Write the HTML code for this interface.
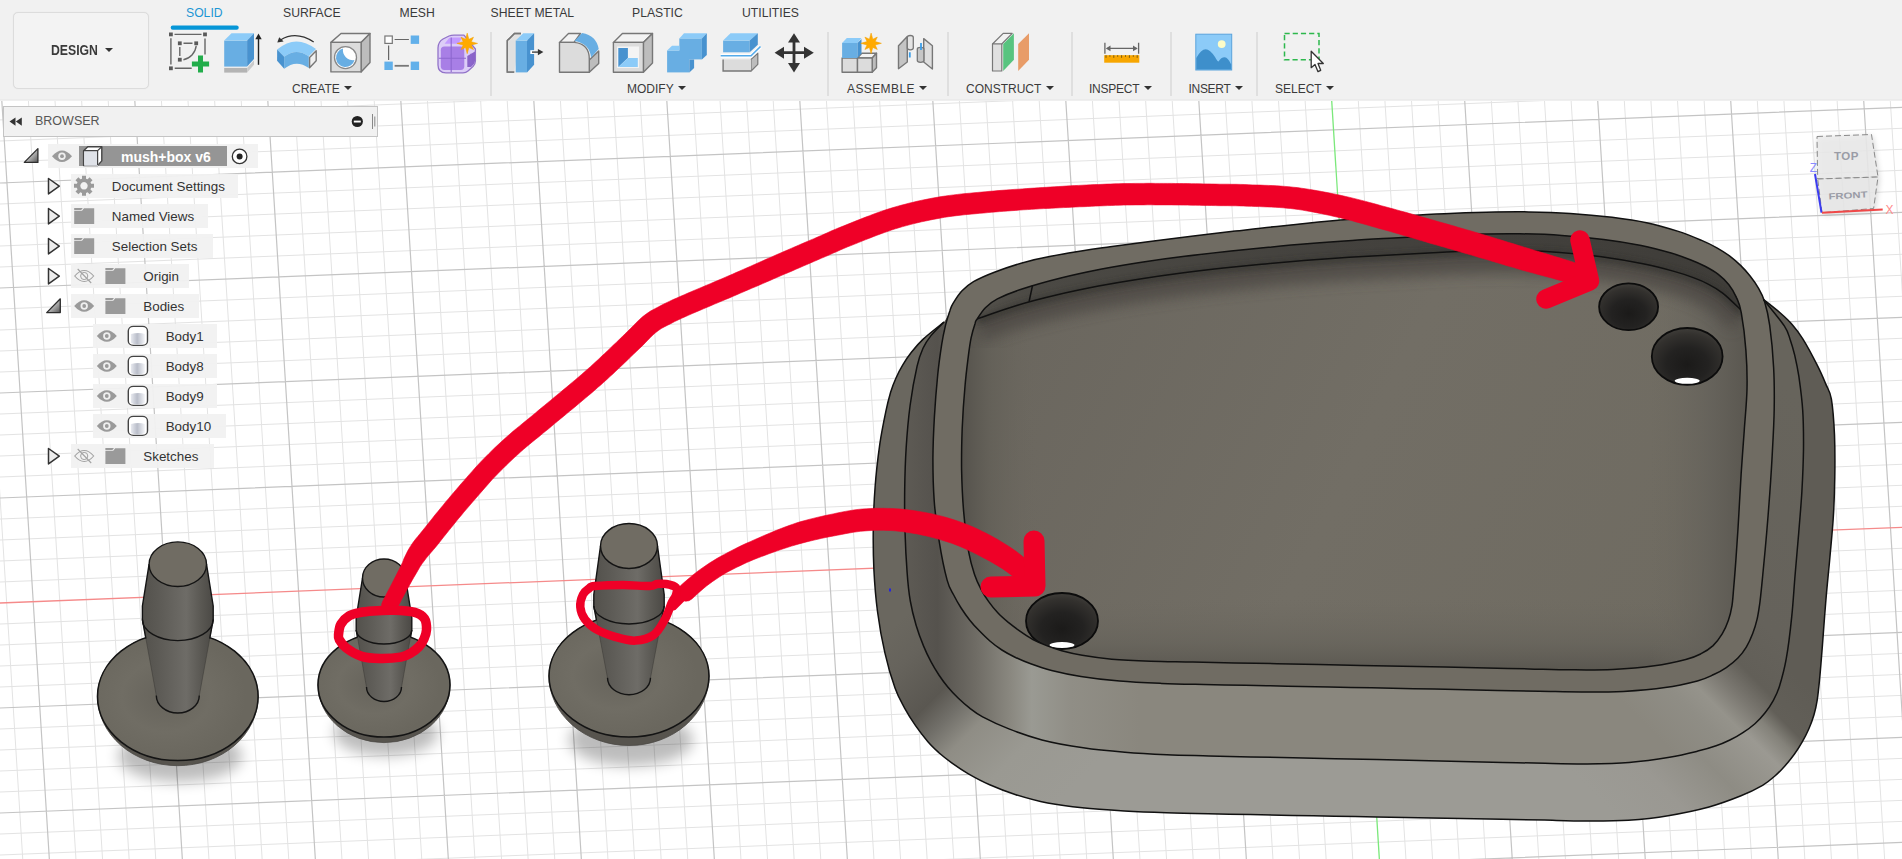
<!DOCTYPE html>
<html><head><meta charset="utf-8"><title>Fusion 360</title>
<style>
html,body{margin:0;padding:0;}
body{width:1902px;height:859px;overflow:hidden;position:relative;background:#fff;font-family:"Liberation Sans",sans-serif;}
#vp{position:absolute;left:0;top:0;width:1902px;height:859px;}
#tb{position:absolute;left:0;top:0;width:1902px;height:101px;background:linear-gradient(#f1f1f1 0,#f1f1f1 98.5px,#e8e8e8 100px,#f6f6f6 101px);}
.tab{position:absolute;top:6px;font-size:12.2px;color:#3a3a3a;white-space:nowrap;line-height:14px;}
.tab.on{color:#1c96d4;}
.lbl{position:absolute;top:82px;font-size:12px;color:#3a3a3a;white-space:nowrap;line-height:14px;}
.lbl i{display:inline-block;width:0;height:0;border-left:4px solid transparent;border-right:4px solid transparent;border-top:4.6px solid #333;margin-left:4.5px;vertical-align:2.6px;}
.sep{position:absolute;top:32px;width:2px;height:64px;background:#dfdfdf;margin-left:-0.5px;}
.ic{position:absolute;top:31px;width:42px;height:44px;}
#design{position:absolute;left:13px;top:12px;width:134px;height:75px;border:1px solid #dcdcdc;border-radius:5px;background:#f3f3f3;box-shadow:0 0 1px #ddd;}
#design span{position:absolute;left:37px;top:29.5px;font-weight:bold;font-size:14px;color:#3a3a3a;line-height:15px;transform:scaleX(0.875);transform-origin:0 50%;}
#design i{position:absolute;left:90.5px;top:35px;width:0;height:0;border-left:4px solid transparent;border-right:4px solid transparent;border-top:4.6px solid #333;}
#bh{position:absolute;left:3px;top:106px;width:373px;height:29px;background:#f1f1f1;border:1px solid #c4c4c4;}
#bh span{position:absolute;left:31px;top:7px;font-size:12.5px;color:#555;line-height:15px;}
.row{position:absolute;height:24px;background:rgba(241,241,241,0.94);}
.row span{position:absolute;top:4.5px;font-size:13.4px;color:#333;white-space:nowrap;line-height:16px;}
.bi{position:absolute;}
</style></head><body>
<svg id="vp" width="1902" height="859" viewBox="0 0 1902 859">
<defs><filter id="blur8" x="-30%" y="-30%" width="160%" height="160%"><feGaussianBlur stdDeviation="7"/></filter><filter id="blur3" x="-30%" y="-30%" width="160%" height="160%"><feGaussianBlur stdDeviation="3"/></filter></defs>
<path d="M-104.7,99 L-56.9,860 M-78.1,99 L-30.3,860 M-51.5,99 L-3.8,860 M-24.9,99 L22.8,860 M28.3,99 L76.0,860 M54.9,99 L102.6,860 M81.5,99 L129.2,860 M108.1,99 L155.8,860 M161.3,99 L209.0,860 M187.9,99 L235.6,860 M214.5,99 L262.2,860 M241.1,99 L288.8,860 M294.3,99 L342.0,860 M320.9,99 L368.6,860 M347.5,99 L395.2,860 M374.1,99 L421.8,860 M427.3,99 L475.0,860 M453.9,99 L501.6,860 M480.5,99 L528.2,860 M507.1,99 L554.8,860 M560.3,99 L608.0,860 M586.9,99 L634.6,860 M613.5,99 L661.2,860 M640.1,99 L687.8,860 M693.3,99 L741.0,860 M719.9,99 L767.6,860 M746.5,99 L794.2,860 M773.1,99 L820.8,860 M826.3,99 L874.0,860 M852.9,99 L900.6,860 M879.5,99 L927.2,860 M906.1,99 L953.8,860 M959.3,99 L1007.0,860 M985.9,99 L1033.6,860 M1012.5,99 L1060.2,860 M1039.1,99 L1086.8,860 M1092.3,99 L1140.0,860 M1118.9,99 L1166.6,860 M1145.5,99 L1193.2,860 M1172.1,99 L1219.8,860 M1225.2,99 L1273.0,860 M1251.8,99 L1299.6,860 M1278.4,99 L1326.2,860 M1305.0,99 L1352.8,860 M1358.2,99 L1406.0,860 M1384.8,99 L1432.6,860 M1411.4,99 L1459.2,860 M1438.0,99 L1485.7,860 M1491.2,99 L1538.9,860 M1517.8,99 L1565.5,860 M1544.4,99 L1592.1,860 M1571.0,99 L1618.7,860 M1624.2,99 L1671.9,860 M1650.8,99 L1698.5,860 M1677.4,99 L1725.1,860 M1704.0,99 L1751.7,860 M1757.2,99 L1804.9,860 M1783.8,99 L1831.5,860 M1810.4,99 L1858.1,860 M1837.0,99 L1884.7,860 M1890.2,99 L1937.9,860 M1916.8,99 L1964.5,860 M1943.4,99 L1991.1,860 M-2,99.0 L1904,23.2 M-2,120.0 L1904,44.2 M-2,141.1 L1904,65.2 M-2,162.1 L1904,86.2 M-2,204.1 L1904,128.2 M-2,225.1 L1904,149.2 M-2,246.1 L1904,170.2 M-2,267.1 L1904,191.2 M-2,309.1 L1904,233.2 M-2,330.1 L1904,254.2 M-2,351.1 L1904,275.2 M-2,372.1 L1904,296.2 M-2,414.1 L1904,338.2 M-2,435.1 L1904,359.2 M-2,456.1 L1904,380.2 M-2,477.1 L1904,401.2 M-2,519.1 L1904,443.2 M-2,540.1 L1904,464.2 M-2,561.1 L1904,485.2 M-2,582.1 L1904,506.2 M-2,624.1 L1904,548.2 M-2,645.1 L1904,569.2 M-2,666.1 L1904,590.2 M-2,687.1 L1904,611.3 M-2,729.1 L1904,653.3 M-2,750.1 L1904,674.3 M-2,771.1 L1904,695.3 M-2,792.1 L1904,716.3 M-2,834.1 L1904,758.3 M-2,855.1 L1904,779.3 M-2,876.1 L1904,800.3 M-2,897.1 L1904,821.3 M-2,939.1 L1904,863.3" stroke="#e3e3e3" stroke-width="1" fill="none"/>
<path d="M1.7,99 L49.4,860 M134.7,99 L182.4,860 M267.7,99 L315.4,860 M400.7,99 L448.4,860 M533.7,99 L581.4,860 M666.7,99 L714.4,860 M799.7,99 L847.4,860 M932.7,99 L980.4,860 M1065.7,99 L1113.4,860 M1198.7,99 L1246.4,860 M1464.6,99 L1512.3,860 M1597.6,99 L1645.3,860 M1730.6,99 L1778.3,860 M1863.6,99 L1911.3,860 M-2,183.1 L1904,107.2 M-2,288.1 L1904,212.2 M-2,393.1 L1904,317.2 M-2,498.1 L1904,422.2 M-2,708.1 L1904,632.3 M-2,813.1 L1904,737.3 M-2,918.1 L1904,842.3" stroke="#c4c4c4" stroke-width="1.2" fill="none"/>
<path d="M-2,603.1 L1904,527.2" stroke="#f58a8a" stroke-width="1.3" fill="none"/>
<path d="M1331.6,99 L1379.4,860" stroke="#7be87b" stroke-width="1.3" fill="none"/>
<defs>
<linearGradient id="gLow" gradientUnits="userSpaceOnUse" x1="873" y1="0" x2="1836" y2="0">
<stop offset="0" stop-color="#6a675f"/><stop offset="0.03" stop-color="#63605a"/><stop offset="0.055" stop-color="#5a5751"/><stop offset="0.075" stop-color="#74726b"/><stop offset="0.095" stop-color="#8f8d85"/><stop offset="0.13" stop-color="#9a9992"/><stop offset="0.17" stop-color="#9c9b95"/><stop offset="0.4" stop-color="#9d9c96"/><stop offset="0.8" stop-color="#9a9892"/><stop offset="0.87" stop-color="#8e8c84"/><stop offset="0.915" stop-color="#9b9992"/><stop offset="0.945" stop-color="#6a6760"/><stop offset="0.97" stop-color="#615e57"/><stop offset="1" stop-color="#5f5c55"/>
</linearGradient>
<linearGradient id="gLowL" gradientUnits="userSpaceOnUse" x1="0" y1="0" x2="1000" y2="1000">
<stop offset="0.76" stop-color="#6a675f"/><stop offset="0.783" stop-color="#66635c"/><stop offset="0.816" stop-color="#5a5751"/><stop offset="0.833" stop-color="#72706a"/><stop offset="0.851" stop-color="#8f8d85"/><stop offset="0.885" stop-color="#9a9992"/><stop offset="0.93" stop-color="#9c9b95"/>
</linearGradient>
<linearGradient id="gLowR" gradientUnits="userSpaceOnUse" x1="1000" y1="1000" x2="2000" y2="0">
<stop offset="0.40" stop-color="#9c9b95"/><stop offset="0.4378" stop-color="#9a9892"/><stop offset="0.4725" stop-color="#8e8c84"/><stop offset="0.5065" stop-color="#9b9992"/><stop offset="0.52" stop-color="#84827a"/><stop offset="0.531" stop-color="#625f58"/><stop offset="0.56" stop-color="#5f5c55"/>
</linearGradient>
<linearGradient id="gUpR" gradientUnits="userSpaceOnUse" x1="1000" y1="1000" x2="2000" y2="0">
<stop offset="0.3" stop-color="#8a877e"/><stop offset="0.46" stop-color="#8a877e"/><stop offset="0.49" stop-color="#8f8d85"/><stop offset="0.505" stop-color="#95938b"/><stop offset="0.521" stop-color="#7b7871"/><stop offset="0.538" stop-color="#625f58"/><stop offset="0.57" stop-color="#65625b"/><stop offset="0.7" stop-color="#67645c"/>
</linearGradient>
<linearGradient id="gBack" gradientUnits="userSpaceOnUse" x1="960" y1="0" x2="1750" y2="0">
<stop offset="0" stop-color="#55524c"/><stop offset="0.1" stop-color="#4b4944"/><stop offset="0.45" stop-color="#44423e"/><stop offset="1" stop-color="#3f3d39"/>
</linearGradient>
<clipPath id="cL"><rect x="800" y="150" width="550" height="720"/></clipPath>
<clipPath id="cR"><rect x="1350" y="150" width="560" height="720"/></clipPath>
<linearGradient id="gUp" gradientUnits="userSpaceOnUse" x1="873" y1="0" x2="1836" y2="0">
<stop offset="0" stop-color="#65625b"/><stop offset="0.035" stop-color="#5d5a54"/><stop offset="0.067" stop-color="#55524d"/><stop offset="0.107" stop-color="#6f6c65"/><stop offset="0.143" stop-color="#8a8880"/><stop offset="0.165" stop-color="#9a9a93"/><stop offset="0.205" stop-color="#908e86"/><stop offset="0.277" stop-color="#8a877e"/><stop offset="0.5" stop-color="#8a877e"/><stop offset="0.83" stop-color="#88857c"/><stop offset="0.885" stop-color="#94928a"/><stop offset="0.915" stop-color="#68655d"/><stop offset="0.94" stop-color="#64615a"/><stop offset="1" stop-color="#66635b"/>
</linearGradient>
<linearGradient id="gFloor" gradientUnits="userSpaceOnUse" x1="1000" y1="300" x2="1700" y2="640">
<stop offset="0" stop-color="#6a665e"/><stop offset="0.5" stop-color="#726e65"/><stop offset="1" stop-color="#6f6b61"/>
</linearGradient>
<linearGradient id="gWallT" gradientUnits="userSpaceOnUse" x1="1350" y1="235" x2="1365" y2="330">
<stop offset="0" stop-color="#3f3d39"/><stop offset="0.2" stop-color="#4a4843"/><stop offset="0.45" stop-color="#5b5851" stop-opacity="0.9"/><stop offset="1" stop-color="#6c685f" stop-opacity="0"/>
</linearGradient>
<linearGradient id="gWallL" gradientUnits="userSpaceOnUse" x1="962" y1="0" x2="1040" y2="0">
<stop offset="0" stop-color="#55524c"/><stop offset="0.35" stop-color="#625f57" stop-opacity="0.8"/><stop offset="1" stop-color="#6c685f" stop-opacity="0"/>
</linearGradient>
<linearGradient id="gWallR" gradientUnits="userSpaceOnUse" x1="1747" y1="0" x2="1650" y2="0">
<stop offset="0" stop-color="#5a5750"/><stop offset="0.4" stop-color="#64615a" stop-opacity="0.8"/><stop offset="1" stop-color="#6c685f" stop-opacity="0"/>
</linearGradient>
<linearGradient id="gWallB" gradientUnits="userSpaceOnUse" x1="0" y1="672" x2="0" y2="600">
<stop offset="0" stop-color="#59564f"/><stop offset="0.4" stop-color="#65625a" stop-opacity="0.7"/><stop offset="1" stop-color="#6c685f" stop-opacity="0"/>
</linearGradient>
<radialGradient id="gHole" cx="0.5" cy="0.64" r="0.66">
<stop offset="0" stop-color="#1b1a19"/><stop offset="0.45" stop-color="#232221"/><stop offset="0.8" stop-color="#33312e"/><stop offset="1" stop-color="#42403c"/>
</radialGradient>
<clipPath id="cR2"><path d="M976.7,319.7C978.4,317.1 981.9,311.2 985.4,307.7C988.8,304.3 991.5,301.9 997.4,298.9C1003.2,295.9 1009.9,293.0 1020.5,289.5C1031.1,286.0 1047.2,281.4 1060.8,278.0C1074.3,274.6 1088.1,271.7 1101.8,269.0C1115.5,266.4 1129.4,264.1 1143.2,262.0C1157.0,259.9 1170.9,258.0 1184.8,256.3C1198.7,254.5 1212.6,253.0 1226.6,251.5C1240.5,250.0 1254.4,248.6 1268.4,247.3C1282.3,245.9 1296.2,244.6 1310.2,243.5C1324.2,242.3 1338.1,241.3 1352.1,240.4C1366.1,239.4 1380.1,238.7 1394.0,237.9C1408.0,237.1 1422.0,236.3 1436.0,235.7C1450.0,235.1 1464.0,234.4 1478.0,234.1C1492.0,233.8 1506.0,233.5 1520.0,233.8C1534.0,234.0 1548.0,234.4 1561.9,235.4C1575.9,236.3 1590.5,237.7 1603.7,239.4C1616.9,241.0 1629.9,243.2 1641.2,245.4C1652.4,247.7 1662.9,250.6 1671.1,253.0C1679.4,255.5 1685.2,257.7 1690.9,260.0C1696.6,262.2 1700.9,264.1 1705.5,266.5C1710.0,268.9 1714.4,271.3 1718.3,274.3C1722.2,277.3 1725.9,280.9 1728.9,284.7C1732.0,288.6 1734.5,292.9 1736.5,297.6C1738.6,302.2 1739.8,304.0 1741.3,312.8C1742.9,321.6 1745.0,337.6 1745.9,350.4C1746.9,363.2 1747.3,375.8 1747.0,389.3C1746.7,402.8 1745.1,417.2 1744.2,431.2C1743.2,445.1 1742.1,459.1 1741.2,473.0C1740.3,487.0 1739.6,501.0 1738.8,515.0C1738.0,529.0 1737.0,544.8 1736.1,556.9C1735.3,569.0 1734.4,579.6 1733.7,587.8C1733.0,595.9 1732.8,600.3 1732.0,605.7C1731.1,611.1 1730.1,615.5 1728.4,620.2C1726.8,624.9 1724.7,629.6 1722.2,633.8C1719.6,638.0 1716.6,642.2 1713.1,645.6C1709.5,648.9 1705.3,651.6 1700.7,653.9C1696.2,656.2 1693.5,657.6 1685.8,659.5C1678.1,661.5 1666.7,664.2 1654.5,665.8C1642.3,667.5 1626.7,668.8 1612.8,669.4C1598.8,670.1 1584.8,669.9 1570.8,669.8C1556.8,669.7 1542.8,669.2 1528.8,668.9C1514.8,668.6 1500.8,668.2 1486.8,667.9C1472.8,667.7 1458.8,667.4 1444.8,667.1C1430.8,666.8 1416.8,666.5 1402.8,666.3C1388.8,666.0 1374.8,665.7 1360.8,665.4C1346.8,665.1 1332.8,664.9 1318.8,664.6C1304.8,664.3 1290.8,664.0 1276.8,663.7C1262.8,663.5 1248.7,663.2 1234.7,662.9C1220.7,662.6 1206.7,662.3 1192.7,662.1C1178.7,661.8 1164.2,661.7 1150.7,661.3C1137.3,660.8 1123.3,660.2 1111.8,659.2C1100.4,658.2 1090.5,656.7 1082.2,655.3C1073.8,653.9 1067.6,652.4 1061.7,650.8C1055.8,649.1 1051.4,647.5 1046.6,645.6C1041.8,643.7 1037.3,641.8 1032.9,639.5C1028.5,637.1 1024.4,634.3 1020.3,631.4C1016.2,628.6 1012.1,625.4 1008.3,622.4C1004.6,619.3 1001.3,616.5 998.0,613.0C994.6,609.5 991.4,605.5 988.5,601.4C985.6,597.4 983.0,593.1 980.7,588.6C978.4,584.2 976.7,580.9 974.7,574.9C972.7,568.9 970.7,563.2 968.8,552.7C967.0,542.2 964.9,525.9 963.7,512.1C962.5,498.4 961.9,484.2 961.6,470.2C961.4,456.2 961.7,442.2 962.2,428.2C962.8,414.3 963.9,398.4 965.0,386.3C966.0,374.2 967.4,363.7 968.4,355.6C969.4,347.5 970.0,343.2 971.1,337.8C972.2,332.5 974.1,326.4 975.1,323.4C976.0,320.4 975.0,322.4 976.7,319.7Z"/></clipPath>
<filter id="blur8" x="-30%" y="-30%" width="160%" height="160%"><feGaussianBlur stdDeviation="7"/></filter>
<filter id="blur3" x="-30%" y="-30%" width="160%" height="160%"><feGaussianBlur stdDeviation="3"/></filter>
</defs>
<path d="M1763.5,299.5C1766.4,301.8 1775.9,309.1 1780.6,313.2C1785.4,317.4 1788.4,320.1 1792.1,324.4C1795.8,328.6 1798.7,332.2 1802.8,338.8C1806.9,345.4 1812.9,356.6 1816.7,364.2C1820.6,371.7 1823.4,378.3 1825.8,384.1C1828.3,389.9 1829.9,390.6 1831.4,399.1C1832.8,407.5 1833.9,421.9 1834.5,434.9C1835.0,447.8 1835.0,462.8 1834.8,476.8C1834.6,490.8 1834.1,504.8 1833.2,518.8C1832.3,532.8 1830.8,546.7 1829.6,560.7C1828.3,574.6 1826.8,588.5 1825.7,602.5C1824.5,616.5 1823.6,631.4 1822.5,644.4C1821.5,657.4 1820.4,671.0 1819.5,680.3C1818.6,689.5 1818.1,694.4 1817.2,700.1C1816.3,705.9 1815.4,710.0 1814.0,714.8C1812.6,719.5 1810.9,724.3 1808.9,728.8C1806.9,733.4 1804.5,738.0 1802.1,742.2C1799.7,746.4 1797.4,750.1 1794.5,754.0C1791.7,757.9 1788.5,761.9 1785.1,765.7C1781.8,769.4 1778.4,773.1 1774.6,776.3C1770.9,779.6 1768.2,782.0 1762.6,785.3C1757.0,788.5 1750.0,792.1 1741.0,795.8C1732.1,799.4 1721.2,803.6 1709.0,807.0C1696.9,810.3 1681.5,813.5 1668.1,815.7C1654.6,818.0 1642.0,819.3 1628.4,820.2C1614.8,821.0 1600.4,820.9 1586.4,820.9C1572.4,820.9 1558.4,820.4 1544.4,820.1C1530.4,819.9 1516.4,819.6 1502.4,819.3C1488.3,819.1 1474.3,818.8 1460.3,818.5C1446.3,818.3 1432.3,818.0 1418.3,817.7C1404.3,817.5 1390.3,817.2 1376.3,816.9C1362.3,816.7 1348.3,816.4 1334.3,816.2C1320.3,815.9 1306.2,815.6 1292.2,815.4C1278.2,815.1 1264.2,814.8 1250.2,814.6C1236.2,814.3 1222.2,814.1 1208.2,813.8C1194.2,813.5 1180.2,813.2 1166.2,812.7C1152.2,812.3 1138.2,811.8 1124.2,811.0C1110.2,810.1 1095.0,809.1 1082.3,807.8C1069.5,806.5 1058.8,805.1 1047.7,803.0C1036.6,800.8 1025.5,797.7 1015.8,794.7C1006.2,791.7 997.6,788.3 989.7,784.8C981.8,781.4 974.7,777.5 968.4,773.9C962.1,770.2 956.6,766.4 951.7,762.9C946.9,759.4 943.2,756.5 939.2,753.0C935.3,749.4 931.8,746.2 927.9,741.7C924.0,737.1 919.6,731.5 915.7,725.9C911.8,720.3 908.0,714.3 904.6,708.1C901.2,701.8 898.4,697.5 895.1,688.3C891.8,679.1 887.8,665.6 884.9,652.8C881.9,640.0 879.3,625.4 877.5,611.5C875.7,597.7 874.6,583.7 873.9,569.7C873.2,555.8 873.1,541.7 873.3,527.7C873.5,513.7 874.1,499.7 875.2,485.8C876.2,471.8 878.1,456.4 879.8,444.1C881.6,431.7 884.0,420.3 885.8,411.7C887.6,403.0 889.0,397.8 890.6,392.3C892.3,386.7 893.8,382.8 895.9,378.2C897.9,373.7 900.2,369.2 902.8,364.9C905.3,360.6 907.8,356.8 911.2,352.5C914.6,348.2 917.7,344.2 923.2,339.1C928.6,334.0 940.5,324.9 944.0,322.0Z" fill="url(#gLowL)" clip-path="url(#cL)"/>
<path d="M1763.5,299.5C1766.4,301.8 1775.9,309.1 1780.6,313.2C1785.4,317.4 1788.4,320.1 1792.1,324.4C1795.8,328.6 1798.7,332.2 1802.8,338.8C1806.9,345.4 1812.9,356.6 1816.7,364.2C1820.6,371.7 1823.4,378.3 1825.8,384.1C1828.3,389.9 1829.9,390.6 1831.4,399.1C1832.8,407.5 1833.9,421.9 1834.5,434.9C1835.0,447.8 1835.0,462.8 1834.8,476.8C1834.6,490.8 1834.1,504.8 1833.2,518.8C1832.3,532.8 1830.8,546.7 1829.6,560.7C1828.3,574.6 1826.8,588.5 1825.7,602.5C1824.5,616.5 1823.6,631.4 1822.5,644.4C1821.5,657.4 1820.4,671.0 1819.5,680.3C1818.6,689.5 1818.1,694.4 1817.2,700.1C1816.3,705.9 1815.4,710.0 1814.0,714.8C1812.6,719.5 1810.9,724.3 1808.9,728.8C1806.9,733.4 1804.5,738.0 1802.1,742.2C1799.7,746.4 1797.4,750.1 1794.5,754.0C1791.7,757.9 1788.5,761.9 1785.1,765.7C1781.8,769.4 1778.4,773.1 1774.6,776.3C1770.9,779.6 1768.2,782.0 1762.6,785.3C1757.0,788.5 1750.0,792.1 1741.0,795.8C1732.1,799.4 1721.2,803.6 1709.0,807.0C1696.9,810.3 1681.5,813.5 1668.1,815.7C1654.6,818.0 1642.0,819.3 1628.4,820.2C1614.8,821.0 1600.4,820.9 1586.4,820.9C1572.4,820.9 1558.4,820.4 1544.4,820.1C1530.4,819.9 1516.4,819.6 1502.4,819.3C1488.3,819.1 1474.3,818.8 1460.3,818.5C1446.3,818.3 1432.3,818.0 1418.3,817.7C1404.3,817.5 1390.3,817.2 1376.3,816.9C1362.3,816.7 1348.3,816.4 1334.3,816.2C1320.3,815.9 1306.2,815.6 1292.2,815.4C1278.2,815.1 1264.2,814.8 1250.2,814.6C1236.2,814.3 1222.2,814.1 1208.2,813.8C1194.2,813.5 1180.2,813.2 1166.2,812.7C1152.2,812.3 1138.2,811.8 1124.2,811.0C1110.2,810.1 1095.0,809.1 1082.3,807.8C1069.5,806.5 1058.8,805.1 1047.7,803.0C1036.6,800.8 1025.5,797.7 1015.8,794.7C1006.2,791.7 997.6,788.3 989.7,784.8C981.8,781.4 974.7,777.5 968.4,773.9C962.1,770.2 956.6,766.4 951.7,762.9C946.9,759.4 943.2,756.5 939.2,753.0C935.3,749.4 931.8,746.2 927.9,741.7C924.0,737.1 919.6,731.5 915.7,725.9C911.8,720.3 908.0,714.3 904.6,708.1C901.2,701.8 898.4,697.5 895.1,688.3C891.8,679.1 887.8,665.6 884.9,652.8C881.9,640.0 879.3,625.4 877.5,611.5C875.7,597.7 874.6,583.7 873.9,569.7C873.2,555.8 873.1,541.7 873.3,527.7C873.5,513.7 874.1,499.7 875.2,485.8C876.2,471.8 878.1,456.4 879.8,444.1C881.6,431.7 884.0,420.3 885.8,411.7C887.6,403.0 889.0,397.8 890.6,392.3C892.3,386.7 893.8,382.8 895.9,378.2C897.9,373.7 900.2,369.2 902.8,364.9C905.3,360.6 907.8,356.8 911.2,352.5C914.6,348.2 917.7,344.2 923.2,339.1C928.6,334.0 940.5,324.9 944.0,322.0Z" fill="url(#gLowR)" clip-path="url(#cR)"/>
<path d="M944.0,322.0C941.8,324.3 934.5,331.3 931.0,335.6C927.5,340.0 925.3,343.1 923.0,348.2C920.7,353.3 919.2,356.7 917.1,366.2C914.9,375.8 911.9,392.0 910.1,405.5C908.3,419.0 907.1,433.4 906.2,447.3C905.3,461.3 904.9,475.3 904.7,489.3C904.5,503.3 904.6,517.5 905.0,531.3C905.4,545.1 906.2,560.6 907.1,572.2C907.9,583.9 908.8,592.2 910.3,601.0C911.8,609.8 913.9,617.8 916.1,625.2C918.3,632.7 921.0,639.8 923.5,645.9C926.0,652.1 928.6,657.3 931.2,662.1C933.8,667.0 936.2,670.8 938.9,675.0C941.7,679.2 944.6,683.2 947.8,687.0C951.0,690.9 954.5,694.5 958.1,698.0C961.7,701.5 965.3,704.7 969.4,707.9C973.4,711.0 976.0,713.4 982.6,716.9C989.2,720.4 999.0,725.1 1008.9,728.9C1018.8,732.8 1029.6,736.7 1042.0,739.9C1054.4,743.1 1069.4,745.8 1083.2,747.8C1097.0,749.9 1111.0,751.1 1124.9,752.2C1138.9,753.4 1152.9,754.1 1166.9,754.7C1180.9,755.3 1194.9,755.5 1208.9,755.9C1222.9,756.3 1236.9,756.5 1250.9,756.9C1264.9,757.2 1278.9,757.5 1292.9,757.8C1306.9,758.1 1320.9,758.4 1334.9,758.7C1348.9,759.0 1362.9,759.3 1376.9,759.6C1390.9,759.9 1404.9,760.2 1419.0,760.5C1433.0,760.8 1447.0,761.1 1461.0,761.4C1475.0,761.8 1489.0,762.1 1503.0,762.4C1517.0,762.7 1531.0,763.1 1545.0,763.3C1559.0,763.6 1573.0,764.0 1587.0,763.9C1601.0,763.7 1615.2,763.5 1629.0,762.4C1642.7,761.3 1658.1,759.1 1669.5,757.2C1681.0,755.3 1690.1,753.0 1697.8,751.1C1705.6,749.3 1710.7,747.7 1716.1,745.8C1721.4,744.0 1725.4,742.2 1729.9,740.0C1734.4,737.8 1738.8,735.4 1742.9,732.6C1747.1,729.9 1751.2,727.0 1754.9,723.7C1758.6,720.4 1762.1,716.7 1765.1,712.8C1768.2,708.9 1771.0,704.6 1773.4,700.3C1775.8,695.9 1777.2,693.5 1779.4,686.5C1781.5,679.6 1784.3,670.0 1786.3,658.4C1788.4,646.8 1790.3,630.8 1791.7,616.9C1793.2,603.0 1793.9,588.9 1795.1,575.0C1796.2,561.0 1797.6,547.1 1798.7,533.1C1799.8,519.2 1801.1,505.2 1801.9,491.2C1802.7,477.2 1803.3,462.7 1803.5,449.3C1803.6,435.8 1803.5,422.4 1802.7,410.3C1802.0,398.2 1800.2,385.8 1798.9,376.6C1797.5,367.4 1796.1,361.2 1794.7,355.1C1793.2,348.9 1791.9,344.6 1790.2,339.7C1788.5,334.8 1788.7,332.6 1784.3,325.9C1779.8,319.2 1767.0,303.9 1763.5,299.5 L950,313Z" fill="url(#gUp)" clip-path="url(#cL)"/>
<path d="M944.0,322.0C941.8,324.3 934.5,331.3 931.0,335.6C927.5,340.0 925.3,343.1 923.0,348.2C920.7,353.3 919.2,356.7 917.1,366.2C914.9,375.8 911.9,392.0 910.1,405.5C908.3,419.0 907.1,433.4 906.2,447.3C905.3,461.3 904.9,475.3 904.7,489.3C904.5,503.3 904.6,517.5 905.0,531.3C905.4,545.1 906.2,560.6 907.1,572.2C907.9,583.9 908.8,592.2 910.3,601.0C911.8,609.8 913.9,617.8 916.1,625.2C918.3,632.7 921.0,639.8 923.5,645.9C926.0,652.1 928.6,657.3 931.2,662.1C933.8,667.0 936.2,670.8 938.9,675.0C941.7,679.2 944.6,683.2 947.8,687.0C951.0,690.9 954.5,694.5 958.1,698.0C961.7,701.5 965.3,704.7 969.4,707.9C973.4,711.0 976.0,713.4 982.6,716.9C989.2,720.4 999.0,725.1 1008.9,728.9C1018.8,732.8 1029.6,736.7 1042.0,739.9C1054.4,743.1 1069.4,745.8 1083.2,747.8C1097.0,749.9 1111.0,751.1 1124.9,752.2C1138.9,753.4 1152.9,754.1 1166.9,754.7C1180.9,755.3 1194.9,755.5 1208.9,755.9C1222.9,756.3 1236.9,756.5 1250.9,756.9C1264.9,757.2 1278.9,757.5 1292.9,757.8C1306.9,758.1 1320.9,758.4 1334.9,758.7C1348.9,759.0 1362.9,759.3 1376.9,759.6C1390.9,759.9 1404.9,760.2 1419.0,760.5C1433.0,760.8 1447.0,761.1 1461.0,761.4C1475.0,761.8 1489.0,762.1 1503.0,762.4C1517.0,762.7 1531.0,763.1 1545.0,763.3C1559.0,763.6 1573.0,764.0 1587.0,763.9C1601.0,763.7 1615.2,763.5 1629.0,762.4C1642.7,761.3 1658.1,759.1 1669.5,757.2C1681.0,755.3 1690.1,753.0 1697.8,751.1C1705.6,749.3 1710.7,747.7 1716.1,745.8C1721.4,744.0 1725.4,742.2 1729.9,740.0C1734.4,737.8 1738.8,735.4 1742.9,732.6C1747.1,729.9 1751.2,727.0 1754.9,723.7C1758.6,720.4 1762.1,716.7 1765.1,712.8C1768.2,708.9 1771.0,704.6 1773.4,700.3C1775.8,695.9 1777.2,693.5 1779.4,686.5C1781.5,679.6 1784.3,670.0 1786.3,658.4C1788.4,646.8 1790.3,630.8 1791.7,616.9C1793.2,603.0 1793.9,588.9 1795.1,575.0C1796.2,561.0 1797.6,547.1 1798.7,533.1C1799.8,519.2 1801.1,505.2 1801.9,491.2C1802.7,477.2 1803.3,462.7 1803.5,449.3C1803.6,435.8 1803.5,422.4 1802.7,410.3C1802.0,398.2 1800.2,385.8 1798.9,376.6C1797.5,367.4 1796.1,361.2 1794.7,355.1C1793.2,348.9 1791.9,344.6 1790.2,339.7C1788.5,334.8 1788.7,332.6 1784.3,325.9C1779.8,319.2 1767.0,303.9 1763.5,299.5 L950,313Z" fill="url(#gUpR)" clip-path="url(#cR)"/>
<path d="M953.2,303.1C955.2,299.9 958.4,294.6 961.8,291.0C965.2,287.4 968.1,284.9 973.5,281.7C978.9,278.6 985.4,275.6 994.4,272.2C1003.4,268.8 1015.2,264.6 1027.6,261.4C1039.9,258.2 1054.9,255.4 1068.6,253.0C1082.4,250.6 1096.3,248.7 1110.1,246.7C1124.0,244.8 1137.9,243.0 1151.8,241.2C1165.7,239.4 1179.6,237.7 1193.5,236.0C1207.4,234.4 1221.3,232.7 1235.2,231.1C1249.1,229.5 1263.0,227.8 1276.9,226.4C1290.8,224.9 1304.8,223.4 1318.7,222.1C1332.6,220.8 1346.6,219.6 1360.6,218.6C1374.5,217.6 1388.5,216.7 1402.5,215.9C1416.4,215.1 1430.4,214.3 1444.4,213.7C1458.4,213.0 1472.4,212.5 1486.4,212.2C1500.4,211.9 1514.4,211.7 1528.4,211.9C1542.4,212.1 1556.4,212.5 1570.3,213.4C1584.3,214.3 1599.4,215.7 1612.1,217.2C1624.8,218.8 1635.6,220.3 1646.6,222.7C1657.7,225.0 1669.2,228.5 1678.3,231.4C1687.5,234.4 1695.2,237.7 1701.6,240.4C1708.0,243.1 1712.2,245.2 1716.9,247.8C1721.5,250.4 1725.5,252.9 1729.5,255.8C1733.5,258.8 1737.4,262.3 1740.8,265.6C1744.3,269.0 1747.2,272.3 1750.1,276.0C1753.1,279.8 1756.2,284.1 1758.6,288.4C1761.1,292.7 1762.9,295.8 1764.7,302.0C1766.6,308.2 1768.2,314.6 1769.7,325.4C1771.2,336.3 1772.9,353.2 1773.6,367.2C1774.4,381.1 1774.4,395.1 1774.2,409.1C1774.0,423.1 1773.2,437.1 1772.4,451.1C1771.7,465.0 1770.8,479.0 1769.8,493.0C1768.8,506.9 1767.7,520.9 1766.5,534.8C1765.3,548.8 1763.7,565.4 1762.6,576.7C1761.5,587.9 1760.8,595.4 1759.9,602.5C1758.9,609.5 1758.3,614.0 1757.1,619.2C1755.9,624.4 1754.5,628.9 1752.7,633.5C1750.9,638.2 1748.8,643.0 1746.3,647.1C1743.8,651.2 1741.2,654.7 1737.9,658.1C1734.6,661.6 1730.4,664.8 1726.3,667.6C1722.2,670.4 1718.1,672.6 1713.2,674.8C1708.4,677.1 1705.4,678.8 1697.4,680.9C1689.3,683.0 1677.5,685.8 1665.1,687.5C1652.8,689.3 1637.4,690.6 1623.4,691.4C1609.5,692.1 1595.4,692.0 1581.4,692.0C1567.4,692.0 1553.4,691.5 1539.4,691.3C1525.4,691.0 1511.4,690.7 1497.4,690.4C1483.4,690.1 1469.5,689.8 1455.5,689.5C1441.5,689.2 1427.5,689.0 1413.5,688.7C1399.5,688.4 1385.5,688.1 1371.5,687.8C1357.5,687.5 1343.5,687.3 1329.5,687.0C1315.5,686.7 1301.5,686.4 1287.5,686.2C1273.5,685.9 1259.5,685.6 1245.5,685.3C1231.5,685.0 1217.5,684.8 1203.5,684.5C1189.5,684.2 1175.5,684.0 1161.5,683.4C1147.5,682.8 1133.0,682.2 1119.6,681.0C1106.1,679.9 1092.2,678.2 1080.9,676.4C1069.6,674.6 1060.0,672.5 1051.6,670.4C1043.2,668.3 1036.8,666.0 1030.7,663.8C1024.6,661.6 1019.8,659.5 1015.0,657.2C1010.3,654.9 1006.1,652.7 1001.9,650.0C997.7,647.3 993.7,644.3 989.9,641.0C986.1,637.8 982.5,634.1 979.1,630.6C975.8,627.2 972.8,624.0 969.8,620.2C966.8,616.4 963.8,612.2 961.1,608.0C958.4,603.8 956.0,599.6 953.7,595.0C951.3,590.4 949.6,589.4 947.2,580.4C944.8,571.5 941.3,554.6 939.2,541.3C937.0,528.0 935.2,514.5 934.2,500.7C933.2,486.9 932.9,472.8 932.9,458.8C933.0,444.8 933.6,430.8 934.4,416.8C935.2,402.9 936.5,387.1 937.7,375.0C938.9,362.9 940.4,352.7 941.7,344.3C943.0,335.9 944.3,330.4 945.6,324.8C947.0,319.1 948.7,314.0 950.0,310.4C951.2,306.8 951.2,306.3 953.2,303.1Z" fill="#706c63"/>
<path d="M976.7,319.7C978.4,317.1 981.9,311.2 985.4,307.7C988.8,304.3 991.5,301.9 997.4,298.9C1003.2,295.9 1009.9,293.0 1020.5,289.5C1031.1,286.0 1047.2,281.4 1060.8,278.0C1074.3,274.6 1088.1,271.7 1101.8,269.0C1115.5,266.4 1129.4,264.1 1143.2,262.0C1157.0,259.9 1170.9,258.0 1184.8,256.3C1198.7,254.5 1212.6,253.0 1226.6,251.5C1240.5,250.0 1254.4,248.6 1268.4,247.3C1282.3,245.9 1296.2,244.6 1310.2,243.5C1324.2,242.3 1338.1,241.3 1352.1,240.4C1366.1,239.4 1380.1,238.7 1394.0,237.9C1408.0,237.1 1422.0,236.3 1436.0,235.7C1450.0,235.1 1464.0,234.4 1478.0,234.1C1492.0,233.8 1506.0,233.5 1520.0,233.8C1534.0,234.0 1548.0,234.4 1561.9,235.4C1575.9,236.3 1590.5,237.7 1603.7,239.4C1616.9,241.0 1629.9,243.2 1641.2,245.4C1652.4,247.7 1662.9,250.6 1671.1,253.0C1679.4,255.5 1685.2,257.7 1690.9,260.0C1696.6,262.2 1700.9,264.1 1705.5,266.5C1710.0,268.9 1714.4,271.3 1718.3,274.3C1722.2,277.3 1725.9,280.9 1728.9,284.7C1732.0,288.6 1734.5,292.9 1736.5,297.6C1738.6,302.2 1739.8,304.0 1741.3,312.8C1742.9,321.6 1745.0,337.6 1745.9,350.4C1746.9,363.2 1747.3,375.8 1747.0,389.3C1746.7,402.8 1745.1,417.2 1744.2,431.2C1743.2,445.1 1742.1,459.1 1741.2,473.0C1740.3,487.0 1739.6,501.0 1738.8,515.0C1738.0,529.0 1737.0,544.8 1736.1,556.9C1735.3,569.0 1734.4,579.6 1733.7,587.8C1733.0,595.9 1732.8,600.3 1732.0,605.7C1731.1,611.1 1730.1,615.5 1728.4,620.2C1726.8,624.9 1724.7,629.6 1722.2,633.8C1719.6,638.0 1716.6,642.2 1713.1,645.6C1709.5,648.9 1705.3,651.6 1700.7,653.9C1696.2,656.2 1693.5,657.6 1685.8,659.5C1678.1,661.5 1666.7,664.2 1654.5,665.8C1642.3,667.5 1626.7,668.8 1612.8,669.4C1598.8,670.1 1584.8,669.9 1570.8,669.8C1556.8,669.7 1542.8,669.2 1528.8,668.9C1514.8,668.6 1500.8,668.2 1486.8,667.9C1472.8,667.7 1458.8,667.4 1444.8,667.1C1430.8,666.8 1416.8,666.5 1402.8,666.3C1388.8,666.0 1374.8,665.7 1360.8,665.4C1346.8,665.1 1332.8,664.9 1318.8,664.6C1304.8,664.3 1290.8,664.0 1276.8,663.7C1262.8,663.5 1248.7,663.2 1234.7,662.9C1220.7,662.6 1206.7,662.3 1192.7,662.1C1178.7,661.8 1164.2,661.7 1150.7,661.3C1137.3,660.8 1123.3,660.2 1111.8,659.2C1100.4,658.2 1090.5,656.7 1082.2,655.3C1073.8,653.9 1067.6,652.4 1061.7,650.8C1055.8,649.1 1051.4,647.5 1046.6,645.6C1041.8,643.7 1037.3,641.8 1032.9,639.5C1028.5,637.1 1024.4,634.3 1020.3,631.4C1016.2,628.6 1012.1,625.4 1008.3,622.4C1004.6,619.3 1001.3,616.5 998.0,613.0C994.6,609.5 991.4,605.5 988.5,601.4C985.6,597.4 983.0,593.1 980.7,588.6C978.4,584.2 976.7,580.9 974.7,574.9C972.7,568.9 970.7,563.2 968.8,552.7C967.0,542.2 964.9,525.9 963.7,512.1C962.5,498.4 961.9,484.2 961.6,470.2C961.4,456.2 961.7,442.2 962.2,428.2C962.8,414.3 963.9,398.4 965.0,386.3C966.0,374.2 967.4,363.7 968.4,355.6C969.4,347.5 970.0,343.2 971.1,337.8C972.2,332.5 974.1,326.4 975.1,323.4C976.0,320.4 975.0,322.4 976.7,319.7Z" fill="url(#gFloor)"/>
<g clip-path="url(#cR2)">
<rect x="950" y="560" width="820" height="120" fill="url(#gWallB)"/>
<rect x="950" y="230" width="100" height="460" fill="url(#gWallL)"/>
<rect x="1640" y="230" width="120" height="460" fill="url(#gWallR)"/>
<path d="M977.0,319.0C983.6,316.7 1003.4,309.5 1016.8,305.5C1030.2,301.4 1043.8,298.0 1057.5,294.8C1071.1,291.6 1084.9,288.8 1098.6,286.1C1112.4,283.5 1126.3,281.1 1140.1,279.0C1154.0,276.8 1167.9,274.8 1181.8,273.0C1195.7,271.2 1209.6,269.6 1223.6,268.1C1237.5,266.6 1251.5,265.2 1265.5,263.9C1279.4,262.6 1293.4,261.4 1307.4,260.3C1321.4,259.2 1335.4,258.2 1349.4,257.3C1363.4,256.4 1377.4,255.6 1391.4,254.9C1405.4,254.1 1419.4,253.4 1433.4,252.8C1447.5,252.1 1461.5,251.4 1475.5,251.1C1489.5,250.7 1503.6,250.5 1517.6,250.7C1531.6,250.9 1545.6,251.4 1559.6,252.4C1573.6,253.5 1587.6,254.9 1601.4,256.8C1615.3,258.7 1630.8,261.4 1642.9,263.8C1655.0,266.2 1665.5,269.0 1674.0,271.4C1682.5,273.7 1688.2,275.7 1693.9,277.9C1699.7,280.0 1703.8,281.7 1708.6,284.3C1713.5,286.8 1717.4,288.8 1723.0,293.3C1728.6,297.7 1738.8,308.0 1742.0,311.0" stroke="#4d4a45" stroke-width="30" fill="none" filter="url(#blur8)" transform="translate(0,8)" opacity="0.85"/>
<path d="M977.0,319.0C983.6,316.7 1003.4,309.5 1016.8,305.5C1030.2,301.4 1043.8,298.0 1057.5,294.8C1071.1,291.6 1084.9,288.8 1098.6,286.1C1112.4,283.5 1126.3,281.1 1140.1,279.0C1154.0,276.8 1167.9,274.8 1181.8,273.0C1195.7,271.2 1209.6,269.6 1223.6,268.1C1237.5,266.6 1251.5,265.2 1265.5,263.9C1279.4,262.6 1293.4,261.4 1307.4,260.3C1321.4,259.2 1335.4,258.2 1349.4,257.3C1363.4,256.4 1377.4,255.6 1391.4,254.9C1405.4,254.1 1419.4,253.4 1433.4,252.8C1447.5,252.1 1461.5,251.4 1475.5,251.1C1489.5,250.7 1503.6,250.5 1517.6,250.7C1531.6,250.9 1545.6,251.4 1559.6,252.4C1573.6,253.5 1587.6,254.9 1601.4,256.8C1615.3,258.7 1630.8,261.4 1642.9,263.8C1655.0,266.2 1665.5,269.0 1674.0,271.4C1682.5,273.7 1688.2,275.7 1693.9,277.9C1699.7,280.0 1703.8,281.7 1708.6,284.3C1713.5,286.8 1717.4,288.8 1723.0,293.3C1728.6,297.7 1738.8,308.0 1742.0,311.0 L1760,303 L1760,200 L950,200 L950,320Z" fill="url(#gBack)"/>
<path d="M977.0,319.0C983.6,316.7 1003.4,309.5 1016.8,305.5C1030.2,301.4 1043.8,298.0 1057.5,294.8C1071.1,291.6 1084.9,288.8 1098.6,286.1C1112.4,283.5 1126.3,281.1 1140.1,279.0C1154.0,276.8 1167.9,274.8 1181.8,273.0C1195.7,271.2 1209.6,269.6 1223.6,268.1C1237.5,266.6 1251.5,265.2 1265.5,263.9C1279.4,262.6 1293.4,261.4 1307.4,260.3C1321.4,259.2 1335.4,258.2 1349.4,257.3C1363.4,256.4 1377.4,255.6 1391.4,254.9C1405.4,254.1 1419.4,253.4 1433.4,252.8C1447.5,252.1 1461.5,251.4 1475.5,251.1C1489.5,250.7 1503.6,250.5 1517.6,250.7C1531.6,250.9 1545.6,251.4 1559.6,252.4C1573.6,253.5 1587.6,254.9 1601.4,256.8C1615.3,258.7 1630.8,261.4 1642.9,263.8C1655.0,266.2 1665.5,269.0 1674.0,271.4C1682.5,273.7 1688.2,275.7 1693.9,277.9C1699.7,280.0 1703.8,281.7 1708.6,284.3C1713.5,286.8 1717.4,288.8 1723.0,293.3C1728.6,297.7 1738.8,308.0 1742.0,311.0" stroke="#33312e" stroke-width="6" fill="none" filter="url(#blur3)" transform="translate(0,2)" opacity="0.8"/>
</g>
<g clip-path="url(#cR2)"><ellipse cx="1628.6" cy="306.8" rx="29.5" ry="23.4" fill="url(#gHole)" stroke="#0c0c0c" stroke-width="1.8"/>
</g>
<g clip-path="url(#cR2)"><ellipse cx="1687.2" cy="356.4" rx="35.4" ry="28.4" fill="url(#gHole)" stroke="#0c0c0c" stroke-width="1.8"/>
<ellipse cx="1687.2" cy="380.8" rx="12.5" ry="3" fill="#fff"/>
</g>
<g clip-path="url(#cR2)"><ellipse cx="1062" cy="621" rx="36" ry="28" fill="url(#gHole)" stroke="#0c0c0c" stroke-width="1.8"/>
<ellipse cx="1062" cy="645.0" rx="12.5" ry="3" fill="#fff"/>
</g>
<path d="M977.0,319.0C983.6,316.7 1003.4,309.5 1016.8,305.5C1030.2,301.4 1043.8,298.0 1057.5,294.8C1071.1,291.6 1084.9,288.8 1098.6,286.1C1112.4,283.5 1126.3,281.1 1140.1,279.0C1154.0,276.8 1167.9,274.8 1181.8,273.0C1195.7,271.2 1209.6,269.6 1223.6,268.1C1237.5,266.6 1251.5,265.2 1265.5,263.9C1279.4,262.6 1293.4,261.4 1307.4,260.3C1321.4,259.2 1335.4,258.2 1349.4,257.3C1363.4,256.4 1377.4,255.6 1391.4,254.9C1405.4,254.1 1419.4,253.4 1433.4,252.8C1447.5,252.1 1461.5,251.4 1475.5,251.1C1489.5,250.7 1503.6,250.5 1517.6,250.7C1531.6,250.9 1545.6,251.4 1559.6,252.4C1573.6,253.5 1587.6,254.9 1601.4,256.8C1615.3,258.7 1630.8,261.4 1642.9,263.8C1655.0,266.2 1665.5,269.0 1674.0,271.4C1682.5,273.7 1688.2,275.7 1693.9,277.9C1699.7,280.0 1703.8,281.7 1708.6,284.3C1713.5,286.8 1717.4,288.8 1723.0,293.3C1728.6,297.7 1738.8,308.0 1742.0,311.0" stroke="#111" stroke-width="1.5" fill="none" stroke-linejoin="round" clip-path="url(#cR2)"/>
<path d="M1032.6,285.2 L1029.1,301.5" stroke="#111" stroke-width="1.5" fill="none" stroke-linejoin="round"/>
<path d="M976.7,319.7C978.4,317.1 981.9,311.2 985.4,307.7C988.8,304.3 991.5,301.9 997.4,298.9C1003.2,295.9 1009.9,293.0 1020.5,289.5C1031.1,286.0 1047.2,281.4 1060.8,278.0C1074.3,274.6 1088.1,271.7 1101.8,269.0C1115.5,266.4 1129.4,264.1 1143.2,262.0C1157.0,259.9 1170.9,258.0 1184.8,256.3C1198.7,254.5 1212.6,253.0 1226.6,251.5C1240.5,250.0 1254.4,248.6 1268.4,247.3C1282.3,245.9 1296.2,244.6 1310.2,243.5C1324.2,242.3 1338.1,241.3 1352.1,240.4C1366.1,239.4 1380.1,238.7 1394.0,237.9C1408.0,237.1 1422.0,236.3 1436.0,235.7C1450.0,235.1 1464.0,234.4 1478.0,234.1C1492.0,233.8 1506.0,233.5 1520.0,233.8C1534.0,234.0 1548.0,234.4 1561.9,235.4C1575.9,236.3 1590.5,237.7 1603.7,239.4C1616.9,241.0 1629.9,243.2 1641.2,245.4C1652.4,247.7 1662.9,250.6 1671.1,253.0C1679.4,255.5 1685.2,257.7 1690.9,260.0C1696.6,262.2 1700.9,264.1 1705.5,266.5C1710.0,268.9 1714.4,271.3 1718.3,274.3C1722.2,277.3 1725.9,280.9 1728.9,284.7C1732.0,288.6 1734.5,292.9 1736.5,297.6C1738.6,302.2 1739.8,304.0 1741.3,312.8C1742.9,321.6 1745.0,337.6 1745.9,350.4C1746.9,363.2 1747.3,375.8 1747.0,389.3C1746.7,402.8 1745.1,417.2 1744.2,431.2C1743.2,445.1 1742.1,459.1 1741.2,473.0C1740.3,487.0 1739.6,501.0 1738.8,515.0C1738.0,529.0 1737.0,544.8 1736.1,556.9C1735.3,569.0 1734.4,579.6 1733.7,587.8C1733.0,595.9 1732.8,600.3 1732.0,605.7C1731.1,611.1 1730.1,615.5 1728.4,620.2C1726.8,624.9 1724.7,629.6 1722.2,633.8C1719.6,638.0 1716.6,642.2 1713.1,645.6C1709.5,648.9 1705.3,651.6 1700.7,653.9C1696.2,656.2 1693.5,657.6 1685.8,659.5C1678.1,661.5 1666.7,664.2 1654.5,665.8C1642.3,667.5 1626.7,668.8 1612.8,669.4C1598.8,670.1 1584.8,669.9 1570.8,669.8C1556.8,669.7 1542.8,669.2 1528.8,668.9C1514.8,668.6 1500.8,668.2 1486.8,667.9C1472.8,667.7 1458.8,667.4 1444.8,667.1C1430.8,666.8 1416.8,666.5 1402.8,666.3C1388.8,666.0 1374.8,665.7 1360.8,665.4C1346.8,665.1 1332.8,664.9 1318.8,664.6C1304.8,664.3 1290.8,664.0 1276.8,663.7C1262.8,663.5 1248.7,663.2 1234.7,662.9C1220.7,662.6 1206.7,662.3 1192.7,662.1C1178.7,661.8 1164.2,661.7 1150.7,661.3C1137.3,660.8 1123.3,660.2 1111.8,659.2C1100.4,658.2 1090.5,656.7 1082.2,655.3C1073.8,653.9 1067.6,652.4 1061.7,650.8C1055.8,649.1 1051.4,647.5 1046.6,645.6C1041.8,643.7 1037.3,641.8 1032.9,639.5C1028.5,637.1 1024.4,634.3 1020.3,631.4C1016.2,628.6 1012.1,625.4 1008.3,622.4C1004.6,619.3 1001.3,616.5 998.0,613.0C994.6,609.5 991.4,605.5 988.5,601.4C985.6,597.4 983.0,593.1 980.7,588.6C978.4,584.2 976.7,580.9 974.7,574.9C972.7,568.9 970.7,563.2 968.8,552.7C967.0,542.2 964.9,525.9 963.7,512.1C962.5,498.4 961.9,484.2 961.6,470.2C961.4,456.2 961.7,442.2 962.2,428.2C962.8,414.3 963.9,398.4 965.0,386.3C966.0,374.2 967.4,363.7 968.4,355.6C969.4,347.5 970.0,343.2 971.1,337.8C972.2,332.5 974.1,326.4 975.1,323.4C976.0,320.4 975.0,322.4 976.7,319.7Z" stroke="#111" stroke-width="1.5" fill="none" stroke-linejoin="round"/>
<path d="M953.2,303.1C955.2,299.9 958.4,294.6 961.8,291.0C965.2,287.4 968.1,284.9 973.5,281.7C978.9,278.6 985.4,275.6 994.4,272.2C1003.4,268.8 1015.2,264.6 1027.6,261.4C1039.9,258.2 1054.9,255.4 1068.6,253.0C1082.4,250.6 1096.3,248.7 1110.1,246.7C1124.0,244.8 1137.9,243.0 1151.8,241.2C1165.7,239.4 1179.6,237.7 1193.5,236.0C1207.4,234.4 1221.3,232.7 1235.2,231.1C1249.1,229.5 1263.0,227.8 1276.9,226.4C1290.8,224.9 1304.8,223.4 1318.7,222.1C1332.6,220.8 1346.6,219.6 1360.6,218.6C1374.5,217.6 1388.5,216.7 1402.5,215.9C1416.4,215.1 1430.4,214.3 1444.4,213.7C1458.4,213.0 1472.4,212.5 1486.4,212.2C1500.4,211.9 1514.4,211.7 1528.4,211.9C1542.4,212.1 1556.4,212.5 1570.3,213.4C1584.3,214.3 1599.4,215.7 1612.1,217.2C1624.8,218.8 1635.6,220.3 1646.6,222.7C1657.7,225.0 1669.2,228.5 1678.3,231.4C1687.5,234.4 1695.2,237.7 1701.6,240.4C1708.0,243.1 1712.2,245.2 1716.9,247.8C1721.5,250.4 1725.5,252.9 1729.5,255.8C1733.5,258.8 1737.4,262.3 1740.8,265.6C1744.3,269.0 1747.2,272.3 1750.1,276.0C1753.1,279.8 1756.2,284.1 1758.6,288.4C1761.1,292.7 1762.9,295.8 1764.7,302.0C1766.6,308.2 1768.2,314.6 1769.7,325.4C1771.2,336.3 1772.9,353.2 1773.6,367.2C1774.4,381.1 1774.4,395.1 1774.2,409.1C1774.0,423.1 1773.2,437.1 1772.4,451.1C1771.7,465.0 1770.8,479.0 1769.8,493.0C1768.8,506.9 1767.7,520.9 1766.5,534.8C1765.3,548.8 1763.7,565.4 1762.6,576.7C1761.5,587.9 1760.8,595.4 1759.9,602.5C1758.9,609.5 1758.3,614.0 1757.1,619.2C1755.9,624.4 1754.5,628.9 1752.7,633.5C1750.9,638.2 1748.8,643.0 1746.3,647.1C1743.8,651.2 1741.2,654.7 1737.9,658.1C1734.6,661.6 1730.4,664.8 1726.3,667.6C1722.2,670.4 1718.1,672.6 1713.2,674.8C1708.4,677.1 1705.4,678.8 1697.4,680.9C1689.3,683.0 1677.5,685.8 1665.1,687.5C1652.8,689.3 1637.4,690.6 1623.4,691.4C1609.5,692.1 1595.4,692.0 1581.4,692.0C1567.4,692.0 1553.4,691.5 1539.4,691.3C1525.4,691.0 1511.4,690.7 1497.4,690.4C1483.4,690.1 1469.5,689.8 1455.5,689.5C1441.5,689.2 1427.5,689.0 1413.5,688.7C1399.5,688.4 1385.5,688.1 1371.5,687.8C1357.5,687.5 1343.5,687.3 1329.5,687.0C1315.5,686.7 1301.5,686.4 1287.5,686.2C1273.5,685.9 1259.5,685.6 1245.5,685.3C1231.5,685.0 1217.5,684.8 1203.5,684.5C1189.5,684.2 1175.5,684.0 1161.5,683.4C1147.5,682.8 1133.0,682.2 1119.6,681.0C1106.1,679.9 1092.2,678.2 1080.9,676.4C1069.6,674.6 1060.0,672.5 1051.6,670.4C1043.2,668.3 1036.8,666.0 1030.7,663.8C1024.6,661.6 1019.8,659.5 1015.0,657.2C1010.3,654.9 1006.1,652.7 1001.9,650.0C997.7,647.3 993.7,644.3 989.9,641.0C986.1,637.8 982.5,634.1 979.1,630.6C975.8,627.2 972.8,624.0 969.8,620.2C966.8,616.4 963.8,612.2 961.1,608.0C958.4,603.8 956.0,599.6 953.7,595.0C951.3,590.4 949.6,589.4 947.2,580.4C944.8,571.5 941.3,554.6 939.2,541.3C937.0,528.0 935.2,514.5 934.2,500.7C933.2,486.9 932.9,472.8 932.9,458.8C933.0,444.8 933.6,430.8 934.4,416.8C935.2,402.9 936.5,387.1 937.7,375.0C938.9,362.9 940.4,352.7 941.7,344.3C943.0,335.9 944.3,330.4 945.6,324.8C947.0,319.1 948.7,314.0 950.0,310.4C951.2,306.8 951.2,306.3 953.2,303.1Z" stroke="#111" stroke-width="1.5" fill="none" stroke-linejoin="round"/>
<path d="M944.0,322.0C941.8,324.3 934.5,331.3 931.0,335.6C927.5,340.0 925.3,343.1 923.0,348.2C920.7,353.3 919.2,356.7 917.1,366.2C914.9,375.8 911.9,392.0 910.1,405.5C908.3,419.0 907.1,433.4 906.2,447.3C905.3,461.3 904.9,475.3 904.7,489.3C904.5,503.3 904.6,517.5 905.0,531.3C905.4,545.1 906.2,560.6 907.1,572.2C907.9,583.9 908.8,592.2 910.3,601.0C911.8,609.8 913.9,617.8 916.1,625.2C918.3,632.7 921.0,639.8 923.5,645.9C926.0,652.1 928.6,657.3 931.2,662.1C933.8,667.0 936.2,670.8 938.9,675.0C941.7,679.2 944.6,683.2 947.8,687.0C951.0,690.9 954.5,694.5 958.1,698.0C961.7,701.5 965.3,704.7 969.4,707.9C973.4,711.0 976.0,713.4 982.6,716.9C989.2,720.4 999.0,725.1 1008.9,728.9C1018.8,732.8 1029.6,736.7 1042.0,739.9C1054.4,743.1 1069.4,745.8 1083.2,747.8C1097.0,749.9 1111.0,751.1 1124.9,752.2C1138.9,753.4 1152.9,754.1 1166.9,754.7C1180.9,755.3 1194.9,755.5 1208.9,755.9C1222.9,756.3 1236.9,756.5 1250.9,756.9C1264.9,757.2 1278.9,757.5 1292.9,757.8C1306.9,758.1 1320.9,758.4 1334.9,758.7C1348.9,759.0 1362.9,759.3 1376.9,759.6C1390.9,759.9 1404.9,760.2 1419.0,760.5C1433.0,760.8 1447.0,761.1 1461.0,761.4C1475.0,761.8 1489.0,762.1 1503.0,762.4C1517.0,762.7 1531.0,763.1 1545.0,763.3C1559.0,763.6 1573.0,764.0 1587.0,763.9C1601.0,763.7 1615.2,763.5 1629.0,762.4C1642.7,761.3 1658.1,759.1 1669.5,757.2C1681.0,755.3 1690.1,753.0 1697.8,751.1C1705.6,749.3 1710.7,747.7 1716.1,745.8C1721.4,744.0 1725.4,742.2 1729.9,740.0C1734.4,737.8 1738.8,735.4 1742.9,732.6C1747.1,729.9 1751.2,727.0 1754.9,723.7C1758.6,720.4 1762.1,716.7 1765.1,712.8C1768.2,708.9 1771.0,704.6 1773.4,700.3C1775.8,695.9 1777.2,693.5 1779.4,686.5C1781.5,679.6 1784.3,670.0 1786.3,658.4C1788.4,646.8 1790.3,630.8 1791.7,616.9C1793.2,603.0 1793.9,588.9 1795.1,575.0C1796.2,561.0 1797.6,547.1 1798.7,533.1C1799.8,519.2 1801.1,505.2 1801.9,491.2C1802.7,477.2 1803.3,462.7 1803.5,449.3C1803.6,435.8 1803.5,422.4 1802.7,410.3C1802.0,398.2 1800.2,385.8 1798.9,376.6C1797.5,367.4 1796.1,361.2 1794.7,355.1C1793.2,348.9 1791.9,344.6 1790.2,339.7C1788.5,334.8 1788.7,332.6 1784.3,325.9C1779.8,319.2 1767.0,303.9 1763.5,299.5" stroke="#111" stroke-width="1.5" fill="none" stroke-linejoin="round"/>
<path d="M1763.5,299.5C1766.4,301.8 1775.9,309.1 1780.6,313.2C1785.4,317.4 1788.4,320.1 1792.1,324.4C1795.8,328.6 1798.7,332.2 1802.8,338.8C1806.9,345.4 1812.9,356.6 1816.7,364.2C1820.6,371.7 1823.4,378.3 1825.8,384.1C1828.3,389.9 1829.9,390.6 1831.4,399.1C1832.8,407.5 1833.9,421.9 1834.5,434.9C1835.0,447.8 1835.0,462.8 1834.8,476.8C1834.6,490.8 1834.1,504.8 1833.2,518.8C1832.3,532.8 1830.8,546.7 1829.6,560.7C1828.3,574.6 1826.8,588.5 1825.7,602.5C1824.5,616.5 1823.6,631.4 1822.5,644.4C1821.5,657.4 1820.4,671.0 1819.5,680.3C1818.6,689.5 1818.1,694.4 1817.2,700.1C1816.3,705.9 1815.4,710.0 1814.0,714.8C1812.6,719.5 1810.9,724.3 1808.9,728.8C1806.9,733.4 1804.5,738.0 1802.1,742.2C1799.7,746.4 1797.4,750.1 1794.5,754.0C1791.7,757.9 1788.5,761.9 1785.1,765.7C1781.8,769.4 1778.4,773.1 1774.6,776.3C1770.9,779.6 1768.2,782.0 1762.6,785.3C1757.0,788.5 1750.0,792.1 1741.0,795.8C1732.1,799.4 1721.2,803.6 1709.0,807.0C1696.9,810.3 1681.5,813.5 1668.1,815.7C1654.6,818.0 1642.0,819.3 1628.4,820.2C1614.8,821.0 1600.4,820.9 1586.4,820.9C1572.4,820.9 1558.4,820.4 1544.4,820.1C1530.4,819.9 1516.4,819.6 1502.4,819.3C1488.3,819.1 1474.3,818.8 1460.3,818.5C1446.3,818.3 1432.3,818.0 1418.3,817.7C1404.3,817.5 1390.3,817.2 1376.3,816.9C1362.3,816.7 1348.3,816.4 1334.3,816.2C1320.3,815.9 1306.2,815.6 1292.2,815.4C1278.2,815.1 1264.2,814.8 1250.2,814.6C1236.2,814.3 1222.2,814.1 1208.2,813.8C1194.2,813.5 1180.2,813.2 1166.2,812.7C1152.2,812.3 1138.2,811.8 1124.2,811.0C1110.2,810.1 1095.0,809.1 1082.3,807.8C1069.5,806.5 1058.8,805.1 1047.7,803.0C1036.6,800.8 1025.5,797.7 1015.8,794.7C1006.2,791.7 997.6,788.3 989.7,784.8C981.8,781.4 974.7,777.5 968.4,773.9C962.1,770.2 956.6,766.4 951.7,762.9C946.9,759.4 943.2,756.5 939.2,753.0C935.3,749.4 931.8,746.2 927.9,741.7C924.0,737.1 919.6,731.5 915.7,725.9C911.8,720.3 908.0,714.3 904.6,708.1C901.2,701.8 898.4,697.5 895.1,688.3C891.8,679.1 887.8,665.6 884.9,652.8C881.9,640.0 879.3,625.4 877.5,611.5C875.7,597.7 874.6,583.7 873.9,569.7C873.2,555.8 873.1,541.7 873.3,527.7C873.5,513.7 874.1,499.7 875.2,485.8C876.2,471.8 878.1,456.4 879.8,444.1C881.6,431.7 884.0,420.3 885.8,411.7C887.6,403.0 889.0,397.8 890.6,392.3C892.3,386.7 893.8,382.8 895.9,378.2C897.9,373.7 900.2,369.2 902.8,364.9C905.3,360.6 907.8,356.8 911.2,352.5C914.6,348.2 917.7,344.2 923.2,339.1C928.6,334.0 940.5,324.9 944.0,322.0" stroke="#111" stroke-width="1.5" fill="none" stroke-linejoin="round"/>
<defs><linearGradient id="gS1" gradientUnits="userSpaceOnUse" x1="142.4" y1="0" x2="213.2" y2="0"><stop offset="0" stop-color="#53514c"/><stop offset="0.2" stop-color="#5b5954"/><stop offset="0.62" stop-color="#6e6c67"/><stop offset="0.85" stop-color="#585651"/><stop offset="1" stop-color="#4b4945"/></linearGradient><radialGradient id="gD1" gradientUnits="userSpaceOnUse" cx="165.8" cy="696.5" r="80.3" gradientTransform="translate(0 141.4) scale(1 0.797)"><stop offset="0" stop-color="#66635b"/><stop offset="0.55" stop-color="#706d64"/><stop offset="1" stop-color="#6a675e"/></radialGradient></defs>
<ellipse cx="180.0" cy="756.0" rx="62.0" ry="26.0" fill="#000" opacity="0.26" filter="url(#blur8)"/>
<path d="M97.5,696.5 A80.3,64.0 0 0 1 258.1,696.5 A80.3,69.2 0 0 1 97.5,696.5 Z" fill="#57544e" stroke="#4a4844" stroke-width="0.8"/>
<ellipse cx="177.8" cy="696.5" rx="80.3" ry="64.0" fill="url(#gD1)" stroke="#141414" stroke-width="1.6"/>
<path d="M149.1,564.2 L142.4,606.0 L142.4,619.6 L156.3,695.5 A21.5,17.5 0 0 0 199.3,695.5 L213.2,619.6 L213.2,606.0 L206.5,564.2 Z" fill="url(#gS1)"/>
<path d="M142.4,619.6 L156.3,695.5 M213.2,619.6 L199.3,695.5" fill="none" stroke="#3c3a37" stroke-width="1" opacity="0.55"/>
<path d="M149.1,564.2 L142.4,606.0 L142.4,619.6 L145.9,638.6 M206.5,564.2 L213.2,606.0 L213.2,619.6 L209.7,638.6" fill="none" stroke="#141414" stroke-width="1.4" stroke-linejoin="round"/>
<path d="M156.3,695.5 A21.5,17.5 0 0 0 199.3,695.5" fill="none" stroke="#141414" stroke-width="1.4"/>
<path d="M142.4,619.6 A35.4,21.0 0 0 0 213.2,619.6" fill="none" stroke="#141414" stroke-width="1.4"/>
<ellipse cx="177.8" cy="564.2" rx="28.7" ry="22.3" fill="#706c63" stroke="#141414" stroke-width="1.4"/>
<defs><linearGradient id="gS2" gradientUnits="userSpaceOnUse" x1="356.2" y1="0" x2="411.8" y2="0"><stop offset="0" stop-color="#53514c"/><stop offset="0.2" stop-color="#5b5954"/><stop offset="0.62" stop-color="#6e6c67"/><stop offset="0.85" stop-color="#585651"/><stop offset="1" stop-color="#4b4945"/></linearGradient><radialGradient id="gD2" gradientUnits="userSpaceOnUse" cx="374.1" cy="685.0" r="66.0" gradientTransform="translate(0 145.3) scale(1 0.788)"><stop offset="0" stop-color="#66635b"/><stop offset="0.55" stop-color="#706d64"/><stop offset="1" stop-color="#6a675e"/></radialGradient></defs>
<ellipse cx="386.0" cy="733.0" rx="52.0" ry="23.0" fill="#000" opacity="0.26" filter="url(#blur8)"/>
<path d="M318.0,685.0 A66.0,52.0 0 0 1 450.0,685.0 A66.0,57.6 0 0 1 318.0,685.0 Z" fill="#57544e" stroke="#4a4844" stroke-width="0.8"/>
<ellipse cx="384.0" cy="685.0" rx="66.0" ry="52.0" fill="url(#gD2)" stroke="#141414" stroke-width="1.6"/>
<path d="M362.5,578.0 L356.2,617.7 L356.2,630.0 L366.5,687.0 A17.5,14.5 0 0 0 401.5,687.0 L411.8,630.0 L411.8,617.7 L405.5,578.0 Z" fill="url(#gS2)"/>
<path d="M356.2,630.0 L366.5,687.0 M411.8,630.0 L401.5,687.0" fill="none" stroke="#3c3a37" stroke-width="1" opacity="0.55"/>
<path d="M362.5,578.0 L356.2,617.7 L356.2,630.0 L357.5,637.4 M405.5,578.0 L411.8,617.7 L411.8,630.0 L410.5,637.4" fill="none" stroke="#141414" stroke-width="1.4" stroke-linejoin="round"/>
<path d="M366.5,687.0 A17.5,14.5 0 0 0 401.5,687.0" fill="none" stroke="#141414" stroke-width="1.4"/>
<path d="M356.2,630.0 A27.8,14.0 0 0 0 411.8,630.0" fill="none" stroke="#141414" stroke-width="1.4"/>
<ellipse cx="384.0" cy="578.0" rx="21.5" ry="19.0" fill="#706c63" stroke="#141414" stroke-width="1.4"/>
<defs><linearGradient id="gS3" gradientUnits="userSpaceOnUse" x1="593.8" y1="0" x2="664.2" y2="0"><stop offset="0" stop-color="#53514c"/><stop offset="0.2" stop-color="#5b5954"/><stop offset="0.62" stop-color="#6e6c67"/><stop offset="0.85" stop-color="#585651"/><stop offset="1" stop-color="#4b4945"/></linearGradient><radialGradient id="gD3" gradientUnits="userSpaceOnUse" cx="617.0" cy="676.0" r="80.0" gradientTransform="translate(0 160.6) scale(1 0.762)"><stop offset="0" stop-color="#66635b"/><stop offset="0.55" stop-color="#706d64"/><stop offset="1" stop-color="#6a675e"/></radialGradient></defs>
<ellipse cx="631.0" cy="740.0" rx="62.0" ry="26.0" fill="#000" opacity="0.26" filter="url(#blur8)"/>
<path d="M549.0,676.0 A80.0,61.0 0 0 1 709.0,676.0 A80.0,69.5 0 0 1 549.0,676.0 Z" fill="#57544e" stroke="#4a4844" stroke-width="0.8"/>
<ellipse cx="629.0" cy="676.0" rx="80.0" ry="61.0" fill="url(#gD3)" stroke="#141414" stroke-width="1.6"/>
<path d="M600.5,546.0 L593.8,594.6 L593.8,606.0 L607.5,677.7 A21.5,17.0 0 0 0 650.5,677.7 L664.2,606.0 L664.2,594.6 L657.5,546.0 Z" fill="url(#gS3)"/>
<path d="M593.8,606.0 L607.5,677.7 M664.2,606.0 L650.5,677.7" fill="none" stroke="#3c3a37" stroke-width="1" opacity="0.55"/>
<path d="M600.5,546.0 L593.8,594.6 L593.8,606.0 L596.5,620.3 M657.5,546.0 L664.2,594.6 L664.2,606.0 L661.5,620.3" fill="none" stroke="#141414" stroke-width="1.4" stroke-linejoin="round"/>
<path d="M607.5,677.7 A21.5,17.0 0 0 0 650.5,677.7" fill="none" stroke="#141414" stroke-width="1.4"/>
<path d="M593.8,606.0 A35.2,18.0 0 0 0 664.2,606.0" fill="none" stroke="#141414" stroke-width="1.4"/>
<ellipse cx="629.0" cy="546.0" rx="28.5" ry="22.5" fill="#706c63" stroke="#141414" stroke-width="1.4"/>
<path d="M396.7,609.1L398.6,605.5L400.4,601.9L402.2,598.4L404.1,594.9L406.0,591.3L407.9,587.9L409.9,584.4L411.8,580.9L413.8,577.4L415.9,573.9L418.0,570.3L420.0,566.8L422.0,563.8L424.1,561.0L426.3,558.1L428.6,555.3L431.0,552.5L433.6,549.5L436.2,546.4L438.8,543.2L441.3,540.0L443.8,536.8L446.3,533.7L448.8,530.6L451.3,527.5L453.8,524.4L456.3,521.3L458.8,518.2L461.4,515.2L463.9,512.1L466.5,509.1L469.1,506.1L471.7,503.0L474.3,500.0L476.9,497.0L479.5,494.0L482.2,490.9L484.8,487.9L487.4,485.0L490.0,482.0L492.6,479.1L495.3,476.3L498.0,473.5L500.7,470.7L503.5,468.0L506.3,465.2L509.1,462.5L512.0,459.8L514.9,457.1L517.8,454.5L520.7,451.8L523.6,449.3L526.6,446.7L529.6,444.2L532.6,441.7L535.7,439.2L538.9,436.7L542.0,434.1L545.1,431.5L548.3,429.0L551.3,426.4L554.4,423.8L557.5,421.3L560.6,418.7L563.7,416.2L566.8,413.6L569.9,411.0L573.0,408.5L576.1,405.9L579.2,403.3L582.3,400.7L585.4,398.1L588.5,395.5L591.6,392.9L594.7,390.2L597.7,387.5L600.8,384.9L603.9,382.1L606.9,379.4L609.9,376.6L612.9,373.9L615.9,371.1L618.8,368.3L621.8,365.5L624.7,362.7L627.6,359.9L630.5,357.1L633.4,354.3L636.3,351.6L639.2,348.8L642.2,345.9L645.1,342.9L647.9,340.1L650.6,337.3L653.2,334.7L655.8,332.5L658.5,330.4L661.2,328.6L664.2,326.9L667.6,325.2L671.2,323.4L674.6,321.6L678.1,319.9L681.6,318.3L685.2,316.7L688.8,315.1L692.4,313.5L696.1,311.9L699.7,310.4L703.4,308.8L707.1,307.3L710.8,305.7L714.5,304.1L718.2,302.6L721.9,301.0L725.6,299.4L729.4,297.9L733.1,296.3L736.8,294.7L740.5,293.1L744.2,291.5L747.9,289.9L751.6,288.3L755.3,286.8L759.0,285.2L762.7,283.6L766.4,282.0L770.1,280.4L773.7,278.8L777.4,277.2L781.1,275.6L784.8,274.0L788.5,272.5L792.2,270.9L795.8,269.3L799.5,267.7L803.2,266.1L806.9,264.5L810.6,262.9L814.3,261.3L818.0,259.7L821.7,258.1L825.4,256.6L829.0,255.0L832.8,253.3L836.5,251.7L840.2,250.0L843.7,248.5L847.2,247.0L850.9,245.6L854.7,244.1L858.4,242.6L862.1,241.1L865.8,239.6L869.5,238.2L873.2,236.7L876.9,235.3L880.6,233.9L884.3,232.6L888.0,231.3L891.6,230.0L895.3,228.8L899.0,227.7L902.7,226.6L906.5,225.6L910.2,224.6L914.0,223.6L917.8,222.7L921.6,221.8L925.5,221.0L929.3,220.2L933.1,219.4L937.0,218.7L940.8,218.0L944.6,217.3L948.5,216.7L952.3,216.2L956.2,215.7L960.1,215.3L964.0,214.8L967.9,214.4L971.9,214.1L975.8,213.7L979.8,213.3L983.9,213.0L987.9,212.6L991.8,212.2L995.8,211.9L999.7,211.6L1003.7,211.3L1007.7,211.0L1011.7,210.7L1015.7,210.4L1019.6,210.1L1023.6,209.8L1027.6,209.6L1031.6,209.3L1035.6,209.1L1039.6,208.8L1043.6,208.6L1047.6,208.4L1051.6,208.2L1055.6,208.0L1059.6,207.8L1063.6,207.6L1067.6,207.4L1071.6,207.2L1075.6,207.0L1079.6,206.8L1083.6,206.7L1087.6,206.5L1091.6,206.3L1095.6,206.1L1099.6,205.9L1103.6,205.8L1107.6,205.6L1111.6,205.5L1115.6,205.3L1119.5,205.2L1123.5,205.1L1127.5,205.0L1131.4,205.0L1135.4,204.9L1139.4,204.9L1143.4,204.9L1147.4,204.8L1151.4,204.8L1155.4,204.9L1159.4,204.9L1163.4,204.9L1167.4,204.9L1171.4,204.9L1175.4,205.0L1179.4,205.0L1183.4,205.1L1187.4,205.1L1191.4,205.2L1195.4,205.2L1199.4,205.3L1203.4,205.4L1207.4,205.4L1211.4,205.5L1215.5,205.6L1219.5,205.7L1223.6,205.7L1227.6,205.7L1231.6,205.8L1235.6,205.8L1239.5,205.9L1243.4,206.0L1247.4,206.2L1251.4,206.3L1255.5,206.5L1259.5,206.6L1263.4,206.8L1267.4,206.9L1271.4,207.1L1275.3,207.3L1279.2,207.5L1283.1,207.8L1286.9,208.2L1290.7,208.5L1294.5,209.0L1298.4,209.5L1302.2,210.1L1306.1,210.8L1309.9,211.4L1313.8,212.2L1317.6,212.9L1321.5,213.7L1325.3,214.5L1329.2,215.3L1333.1,216.2L1336.9,217.1L1340.8,217.9L1344.6,218.9L1348.4,219.8L1352.2,220.8L1356.0,221.9L1359.8,222.9L1363.7,224.0L1367.5,225.1L1371.3,226.2L1375.2,227.3L1379.1,228.4L1383.0,229.4L1386.8,230.5L1390.7,231.6L1394.5,232.7L1398.3,233.8L1402.2,235.0L1406.0,236.1L1409.9,237.2L1413.7,238.3L1417.6,239.5L1421.4,240.6L1425.3,241.7L1429.1,242.9L1433.0,244.0L1436.9,245.1L1440.7,246.2L1444.6,247.3L1448.4,248.4L1452.3,249.5L1456.2,250.7L1460.0,251.8L1463.9,252.9L1467.7,254.0L1471.5,255.1L1475.4,256.3L1479.2,257.4L1483.1,258.5L1486.9,259.6L1490.7,260.8L1494.6,261.9L1498.4,263.1L1502.3,264.2L1506.1,265.4L1510.0,266.5L1513.9,267.6L1517.7,268.8L1521.6,269.9L1525.5,271.0L1529.4,272.1L1533.3,273.1L1537.2,274.2L1541.1,275.2L1545.0,276.3L1548.9,277.3L1552.7,278.3L1556.6,279.4L1560.4,280.4L1564.3,281.5L1568.0,282.5L1571.6,283.6L1575.0,284.7L1578.1,285.9L1581.4,287.5A10.1,10.1 0 0 0 1590.6,269.5L1586.7,267.5L1582.5,265.5L1578.3,263.9L1574.2,262.5L1570.3,261.2L1566.4,260.0L1562.5,258.8L1558.7,257.6L1554.8,256.5L1551.0,255.3L1547.1,254.1L1543.3,253.0L1539.4,251.8L1535.6,250.7L1531.8,249.5L1528.0,248.3L1524.2,247.2L1520.4,246.0L1516.5,244.8L1512.7,243.6L1508.9,242.5L1505.0,241.3L1501.2,240.1L1497.3,238.9L1493.5,237.7L1489.6,236.6L1485.8,235.4L1481.9,234.2L1478.0,233.1L1474.2,231.9L1470.3,230.8L1466.4,229.7L1462.5,228.6L1458.7,227.5L1454.8,226.3L1451.0,225.2L1447.1,224.1L1443.2,223.0L1439.4,221.9L1435.5,220.8L1431.6,219.7L1427.8,218.6L1423.9,217.5L1420.1,216.4L1416.2,215.3L1412.3,214.2L1408.4,213.1L1404.5,212.0L1400.6,211.0L1396.8,209.9L1392.8,208.8L1389.0,207.8L1385.1,206.7L1381.2,205.7L1377.4,204.6L1373.5,203.5L1369.6,202.5L1365.6,201.4L1361.7,200.4L1357.8,199.4L1353.8,198.4L1349.8,197.4L1345.8,196.5L1341.7,195.6L1337.8,194.7L1333.8,193.9L1329.8,193.1L1325.8,192.3L1321.7,191.5L1317.7,190.8L1313.6,190.1L1309.6,189.4L1305.5,188.8L1301.4,188.2L1297.3,187.6L1293.1,187.2L1288.9,186.7L1284.8,186.4L1280.6,186.1L1276.5,185.8L1272.4,185.6L1268.3,185.4L1264.3,185.3L1260.2,185.1L1256.2,185.0L1252.2,184.9L1248.2,184.7L1244.2,184.5L1240.1,184.4L1235.9,184.3L1231.8,184.3L1227.8,184.2L1223.8,184.2L1219.8,184.2L1215.8,184.1L1211.8,184.0L1207.8,183.9L1203.8,183.9L1199.8,183.8L1195.7,183.7L1191.7,183.7L1187.7,183.6L1183.7,183.6L1179.6,183.5L1175.6,183.5L1171.5,183.4L1167.5,183.4L1163.5,183.4L1159.5,183.4L1155.4,183.4L1151.4,183.3L1147.3,183.3L1143.3,183.4L1139.2,183.4L1135.2,183.4L1131.1,183.5L1127.1,183.5L1123.0,183.6L1118.9,183.7L1114.9,183.8L1110.8,184.0L1106.8,184.1L1102.7,184.3L1098.7,184.5L1094.7,184.6L1090.6,184.8L1086.6,185.0L1082.6,185.2L1078.6,185.4L1074.6,185.6L1070.5,185.8L1066.5,186.0L1062.5,186.3L1058.5,186.5L1054.4,186.8L1050.4,187.0L1046.4,187.3L1042.3,187.5L1038.3,187.8L1034.3,188.1L1030.3,188.3L1026.3,188.6L1022.2,188.9L1018.2,189.2L1014.2,189.4L1010.2,189.7L1006.1,190.0L1002.1,190.3L998.1,190.6L994.0,191.0L990.0,191.3L985.9,191.7L981.9,192.1L977.9,192.4L973.9,192.8L969.9,193.2L965.9,193.5L961.8,193.9L957.7,194.4L953.6,194.9L949.5,195.4L945.4,196.0L941.3,196.6L937.2,197.3L933.1,198.0L929.1,198.8L925.1,199.6L921.0,200.4L917.0,201.3L913.0,202.3L909.0,203.2L905.0,204.3L901.0,205.3L897.0,206.4L893.0,207.6L889.0,208.8L885.0,210.1L881.1,211.4L877.2,212.8L873.3,214.2L869.5,215.7L865.7,217.1L861.9,218.6L858.1,220.1L854.3,221.6L850.6,223.1L846.9,224.6L843.2,226.1L839.4,227.6L835.5,229.2L831.6,230.8L828.0,232.5L824.4,234.1L820.7,235.7L817.0,237.3L813.4,238.9L809.7,240.4L806.0,242.0L802.3,243.6L798.6,245.2L794.9,246.8L791.2,248.4L787.5,250.0L783.8,251.6L780.1,253.2L776.4,254.8L772.8,256.4L769.1,258.0L765.4,259.6L761.7,261.3L758.0,262.9L754.4,264.5L750.7,266.2L747.0,267.8L743.3,269.4L739.7,271.0L736.0,272.6L732.3,274.3L728.7,275.8L725.0,277.4L721.3,279.0L717.6,280.6L714.0,282.1L710.3,283.7L706.6,285.2L702.9,286.8L699.1,288.4L695.4,289.9L691.7,291.5L688.0,293.1L684.3,294.7L680.6,296.3L676.8,298.0L673.1,299.6L669.3,301.4L665.5,303.2L661.8,305.1L658.2,307.0L654.5,308.9L650.5,311.1L646.5,313.8L642.8,316.6L639.3,319.7L636.2,322.7L633.3,325.7L630.5,328.5L627.7,331.3L624.9,334.0L622.1,336.8L619.2,339.6L616.3,342.4L613.4,345.1L610.5,347.9L607.6,350.7L604.7,353.4L601.8,356.1L598.9,358.9L596.0,361.6L593.1,364.2L590.2,366.9L587.2,369.5L584.3,372.1L581.3,374.7L578.3,377.3L575.2,379.9L572.2,382.4L569.1,385.0L566.1,387.6L563.0,390.1L559.9,392.7L556.8,395.2L553.7,397.8L550.6,400.4L547.5,402.9L544.4,405.5L541.3,408.0L538.2,410.6L535.2,413.2L532.1,415.7L529.0,418.3L525.9,420.8L522.8,423.3L519.7,425.9L516.5,428.4L513.3,431.1L510.2,433.8L507.1,436.5L504.0,439.3L501.0,442.0L498.0,444.8L495.0,447.6L492.0,450.5L489.1,453.4L486.2,456.3L483.3,459.2L480.4,462.2L477.6,465.2L474.8,468.3L472.1,471.4L469.4,474.4L466.7,477.5L464.1,480.5L461.4,483.5L458.8,486.6L456.1,489.7L453.5,492.7L450.9,495.8L448.3,498.9L445.6,502.0L443.1,505.2L440.5,508.3L437.9,511.5L435.3,514.6L432.8,517.8L430.3,520.9L427.8,524.1L425.3,527.2L422.8,530.3L420.4,533.3L417.8,536.4L415.2,539.6L412.6,543.1L410.2,546.7L407.9,550.6L405.9,554.6L404.0,558.6L402.5,562.4L400.9,565.9L399.1,569.5L397.3,573.0L395.5,576.6L393.6,580.2L391.8,583.8L389.9,587.4L388.0,591.0L386.2,594.6L384.3,598.2L382.5,601.7A8.0,8.0 0 0 0 396.7,609.1 Z" fill="#ef0027" stroke="#ef0027" stroke-width="0.6" stroke-linejoin="round"/>
<path d="M1580,240 L1589.5,281 L1546,299" stroke="#ef0027" stroke-width="19.5" fill="none" stroke-linecap="round" stroke-linejoin="round"/>
<path d="M691.8,599.0L694.8,596.3L697.8,593.5L700.7,590.9L703.6,588.4L706.5,586.0L709.6,583.7L712.7,581.4L715.9,579.3L719.2,577.1L722.5,574.9L725.7,573.0L729.0,571.2L732.5,569.4L736.1,567.6L739.7,565.9L743.2,564.2L746.8,562.5L750.4,561.0L754.0,559.4L757.7,558.0L761.4,556.6L765.2,555.2L768.9,553.8L772.7,552.4L776.5,551.1L780.2,549.8L784.0,548.5L787.8,547.3L791.5,546.1L795.3,545.0L799.0,543.9L802.8,542.9L806.5,541.9L810.3,541.0L814.1,540.1L817.9,539.2L821.8,538.3L825.7,537.5L829.6,536.7L833.5,536.0L837.4,535.2L841.4,534.5L845.3,533.7L849.2,533.0L853.1,532.3L856.8,531.8L860.4,531.3L864.1,531.0L868.0,530.7L871.9,530.5L875.8,530.3L879.6,530.3L883.4,530.3L887.2,530.4L891.0,530.5L894.8,530.8L898.6,531.2L902.4,531.6L906.2,532.2L910.1,532.8L913.9,533.4L917.7,534.1L921.5,534.9L925.3,535.7L929.0,536.6L932.8,537.6L936.5,538.6L940.2,539.6L943.9,540.8L947.6,541.9L951.2,543.1L954.8,544.4L958.3,545.8L961.8,547.2L965.3,548.8L968.8,550.4L972.3,552.1L975.8,553.8L979.3,555.6L982.7,557.4L986.2,559.2L989.6,561.1L993.0,563.0L996.3,564.9L999.6,566.9L1002.8,568.9L1005.8,571.0L1008.8,573.2L1011.9,575.5L1014.9,578.0L1018.1,580.5L1021.2,583.1A10.6,10.6 0 0 0 1034.8,566.9L1031.7,564.3L1028.6,561.6L1025.5,558.9L1022.2,556.1L1018.8,553.4L1015.3,550.8L1011.7,548.3L1008.1,545.9L1004.5,543.7L1000.9,541.5L997.3,539.3L993.6,537.3L990.0,535.3L986.2,533.3L982.4,531.4L978.6,529.6L974.8,527.8L970.8,526.1L966.9,524.4L962.8,522.9L958.8,521.4L954.7,520.1L950.7,518.8L946.6,517.6L942.5,516.4L938.4,515.4L934.3,514.4L930.1,513.5L926.0,512.7L921.8,511.9L917.6,511.2L913.5,510.6L909.3,510.0L905.1,509.5L900.8,509.1L896.5,508.8L892.2,508.5L887.9,508.4L883.7,508.3L879.4,508.3L875.1,508.3L870.8,508.5L866.7,508.8L862.4,509.0L858.1,509.4L853.7,510.0L849.4,510.7L845.3,511.4L841.2,512.2L837.2,513.0L833.2,513.9L829.2,514.7L825.1,515.6L821.1,516.5L817.1,517.4L813.1,518.4L809.0,519.4L805.0,520.5L800.9,521.6L796.9,522.8L792.9,524.2L788.9,525.6L785.0,527.0L781.1,528.5L777.2,530.0L773.4,531.6L769.6,533.2L765.8,534.8L762.0,536.4L758.3,538.1L754.5,539.7L750.8,541.4L746.9,543.1L743.1,544.8L739.4,546.6L735.6,548.5L731.9,550.4L728.3,552.3L724.7,554.2L720.9,556.2L717.2,558.3L713.5,560.6L709.9,562.8L706.5,565.1L703.0,567.5L699.5,569.9L696.1,572.5L692.7,575.2L689.4,577.9L686.3,580.6L683.2,583.3L680.2,586.0A8.7,8.7 0 0 0 691.8,599.0 Z" fill="#ef0027" stroke="#ef0027" stroke-width="0.6" stroke-linejoin="round"/>
<path d="M673,606 Q679,600 686,593" stroke="#ef0027" stroke-width="9" fill="none" stroke-linecap="round" stroke-linejoin="round"/>
<path d="M1034,541 L1035,586 L991,587" stroke="#ef0027" stroke-width="21" fill="none" stroke-linecap="round" stroke-linejoin="round"/>
<rect x="889.2" y="588.5" width="1.6" height="3" fill="#1414ff"/>
<path d="M338.6,634.0C338.9,631.4 339.2,627.0 341.0,624.0C342.8,621.0 345.9,617.8 349.1,615.9C352.3,614.0 356.0,613.3 360.0,612.5C364.0,611.7 367.3,611.4 372.9,611.0C378.5,610.6 386.8,610.1 393.8,610.3C400.8,610.5 409.7,611.0 414.8,612.4C419.9,613.8 422.6,615.8 424.5,618.7C426.4,621.6 426.6,626.4 426.5,629.8C426.4,633.2 425.2,636.2 424.0,639.0C422.8,641.8 421.2,644.3 419.0,646.6C416.8,648.9 414.0,651.2 411.0,653.0C408.0,654.8 406.0,656.2 400.8,657.1C395.6,658.0 386.3,658.6 379.8,658.5C373.3,658.4 367.3,658.1 361.7,656.4C356.1,654.6 350.0,650.8 346.3,648.0C342.6,645.2 340.6,641.9 339.3,639.6C338.0,637.3 338.3,636.6 338.6,634.0Z" stroke="#ef0027" stroke-width="9.5" fill="none" stroke-linejoin="round"/>
<path d="M580.3,607.0C579.9,602.8 581.5,597.6 583.0,594.5C584.5,591.4 587.3,589.6 589.3,588.2C591.3,586.8 589.3,586.6 594.9,586.1C600.5,585.6 613.8,585.0 622.9,585.0C632.0,585.0 643.7,586.3 649.4,586.1C655.1,585.9 654.2,584.4 657.0,584.0C659.8,583.6 663.0,583.4 666.2,584.0C669.4,584.6 674.4,585.7 676.0,587.5C677.6,589.3 676.7,592.4 676.0,595.0C675.3,597.6 673.6,598.8 671.7,602.9C669.8,607.0 667.8,614.2 664.8,619.6C661.8,625.0 658.5,631.5 653.6,635.0C648.7,638.5 641.7,640.2 635.4,640.6C629.1,641.0 622.4,639.0 615.9,637.1C609.4,635.2 601.4,632.3 596.3,629.4C591.2,626.5 587.8,623.3 585.1,619.6C582.4,615.9 580.6,611.2 580.3,607.0Z" stroke="#ef0027" stroke-width="8.5" fill="none" stroke-linejoin="round"/>
<g>
<path d="M1817,136.5 L1871.5,134.5 L1878,177 L1873.6,208.5 L1822,212.7 L1817.7,179Z" fill="#000" opacity="0.18" filter="url(#blur3)" transform="translate(1,2)"/>
<path d="M1817,136.5 L1871.5,134.5 L1878,177 L1817.7,179Z" fill="#ececec" fill-opacity="0.88" stroke="#8a8a8a" stroke-width="1" stroke-dasharray="6 3"/>
<path d="M1817.7,179 L1878,177 L1873.6,208.5 L1822,212.7Z" fill="#e9e9e9" fill-opacity="0.88" stroke="#8a8a8a" stroke-width="1" stroke-dasharray="6 3"/>
<path d="M1815,174 L1821.5,212.7" stroke="#3b3bf0" stroke-width="2" fill="none"/>
<path d="M1822,212.7 L1882.7,209.5" stroke="#f04848" stroke-width="2" fill="none"/>
<text x="1846.5" y="160" font-family="Liberation Sans,sans-serif" font-weight="bold" font-size="11.5" fill="#9a9ca6" text-anchor="middle" letter-spacing="0.5">TOP</text>
<text x="1848" y="198.5" font-family="Liberation Sans,sans-serif" font-weight="bold" font-size="8.8" fill="#9a9ca6" text-anchor="middle" textLength="39" lengthAdjust="spacingAndGlyphs" transform="rotate(-3 1848 195)">FRONT</text>
<text x="1813.5" y="172" font-family="Liberation Sans,sans-serif" font-size="12" fill="#8b8bff" text-anchor="middle">Z</text>
<text x="1889.5" y="213.5" font-family="Liberation Sans,sans-serif" font-size="12" fill="#ff8b8b" text-anchor="middle">X</text>
</g>
</svg>
<div id="tb">
<div id="design"><span>DESIGN</span><i></i></div>
<div class="tab on" style="left:186px">SOLID</div>
<div class="tab" style="left:283px">SURFACE</div>
<div class="tab" style="left:399.5px">MESH</div>
<div class="tab" style="left:490.6px">SHEET METAL</div>
<div class="tab" style="left:632px">PLASTIC</div>
<div class="tab" style="left:742px">UTILITIES</div>
<div class="lbl" style="left:292px;letter-spacing:0">CREATE<i></i></div>
<div class="lbl" style="left:627px;letter-spacing:0">MODIFY<i></i></div>
<div class="lbl" style="left:847px;letter-spacing:0.4px">ASSEMBLE<i></i></div>
<div class="lbl" style="left:966px;letter-spacing:0">CONSTRUCT<i></i></div>
<div class="lbl" style="left:1089px;letter-spacing:-0.25px">INSPECT<i></i></div>
<div class="lbl" style="left:1188.5px;letter-spacing:-0.3px">INSERT<i></i></div>
<div class="lbl" style="left:1275px;letter-spacing:0">SELECT<i></i></div>
<div class="sep" style="left:490px"></div>
<div class="sep" style="left:827px"></div>
<div class="sep" style="left:947.5px"></div>
<div class="sep" style="left:1071.5px"></div>
<div class="sep" style="left:1170px"></div>
<div class="sep" style="left:1256.5px"></div>
<svg width="1902" height="101" viewBox="0 0 1902 101" style="position:absolute;left:0;top:0">
<rect x="170.7" y="25.6" width="68" height="4.2" rx="2" fill="#0696d7"/>
<g stroke="#666" stroke-width="1.4" fill="none">
<path d="M174.5,34.4H201.5 M170.9,38.2V64.5 M205,38.4V54.5 M174.7,68.3H191.7"/>
<path d="M183.5,43.3H192.5 M179.8,47V56 M196.2,45.8C195.5,53 190,58.5 183.4,59.7"/>
</g>
<rect x="169.0" y="32.5" width="3.8" height="3.8" fill="#5a5a5a"/>
<rect x="203.1" y="32.5" width="3.8" height="3.8" fill="#5a5a5a"/>
<rect x="169.0" y="66.4" width="3.8" height="3.8" fill="#5a5a5a"/>
<rect x="177.9" y="41.4" width="3.8" height="3.8" fill="#5a5a5a"/>
<rect x="194.3" y="41.4" width="3.8" height="3.8" fill="#5a5a5a"/>
<rect x="177.9" y="57.8" width="3.8" height="3.8" fill="#5a5a5a"/>
<path d="M198,55.4h5v6.1h6.1v5h-6.1v6.1h-5v-6.1h-6.1v-5h6.1z" fill="#22ad4b"/>
<polygon points="224.2,67.9 247.1,67.9 247.1,72.6 224.2,72.6" fill="#b4b4b4" />
<polygon points="247.1,67.9 254.0,60.3 254.0,64.8 247.1,72.6" fill="#cacaca" />
<polygon points="224.2,40.6 247.1,40.6 247.1,66.6 224.2,66.6" fill="#68aee3" />
<polygon points="224.2,40.6 231.5,33.2 254.0,33.2 247.1,40.6" fill="#8ccbf8" />
<polygon points="247.1,40.6 254.0,33.2 254.0,59.0 247.1,66.6" fill="#4892cf" />
<path d="M258.5,38.4V64.8" stroke="#222" stroke-width="1.4"/>
<polygon points="258.5,33.6 255.3,39.2 261.7,39.2" fill="#222" />
<path d="M313.7,42 Q296,30.5 280.5,40" stroke="#333" stroke-width="1.3" fill="none"/>
<polygon points="277.3,42.6 279.2,37.2 283.6,41.6" fill="#333" />
<path d="M277.1,49.6 Q296,33.5 316,49.1 L308.8,56.3 Q296,47.5 284.2,56.7Z" fill="#8ccbf8"/>
<path d="M284.2,56.7 Q296,47.5 308.8,56.3 L308.8,67.9 Q296,59 284.2,68.8Z" fill="#68aee3"/>
<polygon points="277.1,49.6 284.2,56.7 284.2,68.8 277.1,60.8" fill="#4892cf" />
<polygon points="309.6,57.6 316.2,50.7 316.2,60.8 309.6,67.7" fill="#f0f0f0" stroke="#777" stroke-width="1.4" stroke-linejoin="round" />
<polygon points="330.9,42.4 341.0,33.5 370.0,33.5 361.1,42.4" fill="#f3f3f3" stroke="#777" stroke-width="1.4" stroke-linejoin="round" />
<polygon points="361.1,42.4 370.0,33.5 370.0,62.5 361.1,71.9" fill="#bdbdbd" stroke="#777" stroke-width="1.4" stroke-linejoin="round" />
<polygon points="330.9,42.4 361.1,42.4 361.1,71.9 330.9,71.9" fill="#dcdcdc" stroke="#777" stroke-width="1.4" stroke-linejoin="round" />
<circle cx="345.5" cy="57.6" r="11" fill="#fff" stroke="#888" stroke-width="1.3"/>
<path d="M343,48.6 A9.4,9.4 0 1 0 354.5,60 A10,10 0 0 1 343,48.6Z" fill="#68aee3"/>
<path d="M394.6,39.5H408.9 M388.6,45.6V59.9" stroke="#666" stroke-width="1.2"/><path d="M394.6,65.8H408.9" stroke="#777" stroke-width="1.8"/>
<rect x="384.9" y="36" width="7.4" height="7.4" fill="#fff" stroke="#777" stroke-width="1.2"/>
<rect x="410.7" y="35.5" width="8.4" height="8.4" fill="#62b0ea"/>
<rect x="384.4" y="61.6" width="8.4" height="8.4" fill="#62b0ea"/>
<rect x="410.7" y="61.6" width="8.4" height="8.4" fill="#62b0ea"/>
<path d="M438,48 Q438,42 443,39 L449,36 Q451,35.2 454,35.2 L464,35.2 L475.4,49 L475.4,61 Q475.4,64 473,66.5 L468,71 Q466,72.8 463,72.8 L446,72.8 Q438,72.8 438,65Z" fill="#dccdf7" stroke="#9273c9" stroke-width="1.3" stroke-linejoin="round"/>
<path d="M444.6,43.7 L449.2,37.9 Q450,37.4 452,37.4 L462,37.4 L458.5,43.7Z" fill="#c39bff"/>
<path d="M467.3,55.9 L475,51.5 L475,60.6 Q475,63 473,65 L470.7,67 L467.3,67Z" fill="#8a63c9"/>
<rect x="440.8" y="46.6" width="23.5" height="23.3" rx="3.6" fill="#a87fe6"/>
<path d="M451.2,37.5V72 M438.8,58.3H466 M470.9,53.8V66.5" stroke="#8d68cf" stroke-width="1.1" fill="none"/>
<polygon points="467.2,33.1 468.9,39.3 473.5,37.2 471.3,41.7 477.6,43.4 471.3,45.1 473.5,49.6 468.9,47.5 467.2,53.7 465.6,47.5 461.0,49.6 463.2,45.1 456.9,43.4 463.2,41.7 461.0,37.2 465.6,39.3" fill="#ffaa00" stroke="#f3a000" stroke-width="0.5" stroke-linejoin="round" />
<path d="M514.2,72H507.3V40.6L514.5,33.5H521" fill="#e2e2e2" stroke="#777" stroke-width="1.4"/>
<polygon points="507.3,40.6 514.2,40.6 514.2,71.9 507.3,71.9" fill="#e0e0e0" />
<path d="M514.2,72H507.3V40.6L514.5,33.5H521" fill="none" stroke="#777" stroke-width="1.4"/>
<polygon points="515.7,40.6 527.0,40.6 527.0,72.4 515.7,72.4" fill="#68aee3" />
<polygon points="515.7,40.6 523.2,33.2 534.1,33.2 527.0,40.6" fill="#8ccbf8" />
<polygon points="527.0,40.6 534.1,33.2 534.1,64.8 527.0,72.4" fill="#4892cf" />
<rect x="530.3" y="50.2" width="4.5" height="3.8" fill="#fff"/>
<path d="M532,52.1H539" stroke="#333" stroke-width="1.3"/>
<polygon points="537.9,48.9 543.4,52.1 537.9,55.3" fill="#333" />
<polygon points="559.5,42.4 568.5,33.5 580.5,33.5 574.0,42.4" fill="#f3f3f3" stroke="#777" stroke-width="1.4" stroke-linejoin="round" />
<path d="M589.3,72.2 L598.7,63.4 L598.7,50.9 L589.3,60Z" fill="#bdbdbd" stroke="#777" stroke-width="1.4" stroke-linejoin="round"/>
<path d="M559.5,42.4 H574.5 Q589.3,44 589.3,59 V72.2 H559.5Z" fill="#dcdcdc" stroke="#777" stroke-width="1.4" stroke-linejoin="round"/>
<path d="M574.5,41.1 L582.1,33 Q596.5,35.5 598.7,49.1 L591.1,57.6 Q589.5,43.5 574.5,41.1Z" fill="#68aee3"/>
<polygon points="613.4,42.4 622.4,33.5 652.5,33.5 643.4,42.4" fill="#f3f3f3" stroke="#777" stroke-width="1.4" stroke-linejoin="round" />
<polygon points="643.4,42.4 652.5,33.5 652.5,63.0 643.4,72.2" fill="#bdbdbd" stroke="#777" stroke-width="1.4" stroke-linejoin="round" />
<polygon points="613.4,42.4 643.4,42.4 643.4,72.2 613.4,72.2" fill="#dcdcdc" stroke="#777" stroke-width="1.4" stroke-linejoin="round" />
<rect x="617" y="46.5" width="22.1" height="21.4" fill="#f4f4f4"/>
<polygon points="618.3,48.1 627.9,48.1 627.9,58.1 618.3,67.0" fill="#4892cf" />
<polygon points="618.3,67.0 627.9,58.1 637.8,58.1 637.8,67.0" fill="#8ccbf8" />
<polygon points="679.3,38.4 701.9,38.4 701.9,59.4 679.3,59.4" fill="#68aee3" />
<polygon points="679.3,38.4 684.0,33.2 706.8,33.2 701.9,38.4" fill="#8ccbf8" />
<polygon points="701.9,38.4 706.8,33.2 706.8,54.9 701.9,59.4" fill="#4892cf" />
<polygon points="667.1,50.5 689.4,50.5 689.4,72.4 667.1,72.4" fill="#68aee3" />
<polygon points="667.1,50.5 672.0,45.7 679.3,45.7 679.3,50.5" fill="#8ccbf8" />
<polygon points="689.4,59.4 694.1,59.4 694.1,67.9 689.4,72.4" fill="#4892cf" />
<polygon points="723.1,40.6 749.7,40.6 749.7,52.3 723.1,52.3" fill="#68aee3" />
<polygon points="723.1,40.6 730.5,33.2 757.8,33.2 749.7,40.6" fill="#8ccbf8" />
<polygon points="749.7,40.6 757.8,33.2 757.8,44.7 749.7,52.3" fill="#4892cf" />
<polygon points="751.1,59.4 757.8,53.2 757.8,64.3 751.1,71.0" fill="#bdbdbd" stroke="#777" stroke-width="1.2" stroke-linejoin="round" />
<path d="M723.1,59.4H751.1V71H723.1Z" fill="#dcdcdc"/><path d="M723.1,59.4V71H751.1" fill="none" stroke="#777" stroke-width="1.4"/>
<path d="M720.7,55.8H751.1L760.5,46.5" stroke="#fff" stroke-width="4" fill="none"/>
<path d="M720.7,55.8H751.1L760.5,46.5" stroke="#55abea" stroke-width="1.6" fill="none"/>
<path d="M794,40V66 M782,52.7H806" stroke="#333" stroke-width="2.8"/>
<polygon points="794.0,33.2 788.0,42.5 800.0,42.5" fill="#333" />
<polygon points="794.0,72.6 788.0,63.0 800.0,63.0" fill="#333" />
<polygon points="774.6,52.7 784.0,46.7 784.0,58.7" fill="#333" />
<polygon points="813.8,52.7 804.0,46.7 804.0,58.7" fill="#333" />
<polygon points="842.1,58.0 857.5,58.0 857.5,72.2 842.1,72.2" fill="#dcdcdc" stroke="#777" stroke-width="1.4" stroke-linejoin="round" />
<polygon points="857.5,58.0 861.8,53.3 876.5,53.3 872.2,58.0" fill="#f3f3f3" stroke="#777" stroke-width="1.4" stroke-linejoin="round" />
<polygon points="872.2,58.0 876.5,53.3 876.5,67.8 872.2,72.2" fill="#bdbdbd" stroke="#777" stroke-width="1.4" stroke-linejoin="round" />
<polygon points="857.5,58.0 872.2,58.0 872.2,72.2 857.5,72.2" fill="#dcdcdc" stroke="#777" stroke-width="1.4" stroke-linejoin="round" />
<polygon points="842.1,42.9 857.5,42.9 857.5,58.0 842.1,58.0" fill="#68aee3" />
<polygon points="842.1,42.9 846.8,38.0 861.5,38.0 857.5,42.9" fill="#8ccbf8" />
<polygon points="857.5,42.9 861.5,38.9 861.5,53.3 857.5,58.0" fill="#4892cf" />
<polygon points="871.1,33.0 872.8,39.2 877.3,37.1 875.2,41.6 881.4,43.3 875.2,45.0 877.3,49.5 872.8,47.4 871.1,53.6 869.4,47.4 864.9,49.5 867.0,45.0 860.8,43.3 867.0,41.6 864.9,37.1 869.4,39.2" fill="#ffaa00" stroke="#f3a000" stroke-width="0.5" stroke-linejoin="round" />
<polygon points="898.5,45.8 907.3,36.6 907.3,62.0 898.5,68.7" fill="#c4c4c4" stroke="#777" stroke-width="1.4" stroke-linejoin="round" />
<path d="M907.3,37.5 Q907.3,35.5 910.3,35.5 Q913.3,35.5 913.3,37.5 V48 Q913.3,49.8 910.3,49.8 Q907.3,49.8 907.3,48Z" fill="#e4e4e4" stroke="#777" stroke-width="1.3"/>
<polygon points="923.7,38.6 932.4,45.8 932.4,69.0 923.7,62.0" fill="#dedede" stroke="#777" stroke-width="1.4" stroke-linejoin="round" />
<path d="M917.3,49 Q917.3,47.3 920.6,47.3 Q923.9,47.3 923.9,49 V60.5 Q923.9,62.3 920.6,62.3 Q917.3,62.3 917.3,60.5Z" fill="#c6c6c6" stroke="#777" stroke-width="1.3"/>
<path d="M909.8,52.2V57.6 M921,42.9V49.9" stroke="#3c9ee8" stroke-width="1.8"/>
<polygon points="992.5,44.0 1003.2,33.3 1012.2,33.3 1001.8,44.0" fill="#f2f2f2" stroke="#777" stroke-width="1.2" stroke-linejoin="round" />
<polygon points="992.5,44.0 1001.8,44.0 1001.8,71.0 992.5,71.0" fill="#e0e0e0" stroke="#777" stroke-width="1.2" stroke-linejoin="round" />
<polygon points="1003.2,44.0 1013.9,33.3 1013.9,59.7 1003.2,71.0" fill="#58c47f" />
<polygon points="1018.2,44.0 1029.0,33.3 1029.0,59.7 1018.2,71.0" fill="#e89c68" />
<rect x="1104.2" y="55.2" width="35.1" height="7.5" fill="#f7a600"/>
<path d="M1106.0,55.2v2.6 M1109.9,55.2v1.6 M1113.8,55.2v2.6 M1117.7,55.2v1.6 M1121.6,55.2v2.6 M1125.5,55.2v1.6 M1129.4,55.2v2.6 M1133.3,55.2v1.6 M1137.2,55.2v2.6" stroke="#7a5a10" stroke-width="1" fill="none"/>
<path d="M1104.9,42.7V53.7 M1138.6,42.7V53.7 M1107,48.4H1136.5" stroke="#666" stroke-width="1.3"/>
<polygon points="1105.8,48.4 1110.5,45.6 1110.5,51.2" fill="#666" />
<polygon points="1137.7,48.4 1133.0,45.6 1133.0,51.2" fill="#666" />
<rect x="1195.8" y="34.2" width="35.9" height="35.8" fill="#8ccbf8" stroke="#5aa3dc" stroke-width="1"/>
<path d="M1196.3,58 Q1201,49.5 1205.7,49.3 Q1210,49.5 1215,57 Q1217.5,61.5 1218.5,61.5 Q1221,57.3 1224.7,57.2 Q1228,57.5 1231.2,64.4 V69.5 H1196.3Z" fill="#3e8fcb"/>
<circle cx="1221.7" cy="44.1" r="3.9" fill="#fdfdc8"/>
<rect x="1284.5" y="33.6" width="34.5" height="26.2" fill="none" stroke="#2db84d" stroke-width="1.5" stroke-dasharray="5.2 3"/>
<path d="M1311.2,51.3 V67.7 L1315,64.4 L1318,71.7 L1320.7,70.3 L1318,63.5 H1323.3Z" fill="#fff" stroke="#333" stroke-width="1.3" stroke-linejoin="round"/>
</svg></div>
<div id="bh"><span>BROWSER</span></div>
<div class="row" style="left:47.8px;top:144.2px;width:210.6px;height:24.2px"></div>
<div style="position:absolute;left:79px;top:146.2px;width:148px;height:19.6px;background:#959595"></div>
<div style="position:absolute;left:121px;top:148.6px;font-size:14px;font-weight:bold;color:#fff;line-height:16px;white-space:nowrap;letter-spacing:0px">mush+box v6</div>
<div class="row" style="left:70.6px;top:174.1px;width:167.4px"><span style="left:41.2px">Document Settings</span></div>
<div class="row" style="left:70.6px;top:204.1px;width:137.2px"><span style="left:41.2px">Named Views</span></div>
<div class="row" style="left:70.6px;top:234.1px;width:142.2px"><span style="left:41.2px">Selection Sets</span></div>
<div class="row" style="left:70.6px;top:264.1px;width:118.3px"><span style="left:72.7px">Origin</span></div>
<div class="row" style="left:70.6px;top:294.1px;width:128.3px"><span style="left:72.7px">Bodies</span></div>
<div class="row" style="left:93.1px;top:324.1px;width:123.5px"><span style="left:72.6px">Body1</span></div>
<div class="row" style="left:93.1px;top:354.1px;width:123.5px"><span style="left:72.6px">Body8</span></div>
<div class="row" style="left:93.1px;top:384.1px;width:123.5px"><span style="left:72.6px">Body9</span></div>
<div class="row" style="left:93.1px;top:414.1px;width:133.4px"><span style="left:72.6px">Body10</span></div>
<div class="row" style="left:70.6px;top:444.1px;width:143.1px"><span style="left:72.7px">Sketches</span></div>
<svg width="400" height="380" viewBox="0 100 400 380" style="position:absolute;left:0;top:100px">
<path d="M9.5,121.6 l6,-4.2 v8.4z M15.8,121.6 l6,-4.2 v8.4z" fill="#333"/>
<circle cx="357.3" cy="121.5" r="5.6" fill="#222"/><rect x="353.8" y="120.6" width="7" height="1.9" fill="#fff"/>
<path d="M372.5,114v15 M374.8,116.5v10" stroke="#888" stroke-width="1"/>
<defs><linearGradient id="gt148" x1="0" y1="0" x2="1" y2="1"><stop offset="0.3" stop-color="#e0e0e0"/><stop offset="1" stop-color="#555"/></linearGradient></defs><path d="M24.3,162.4 h13.6 v-13.8z" fill="url(#gt148)" stroke="#2e2e2e" stroke-width="1.3" stroke-linejoin="round"/>
<path d="M52.0,156.2 Q62.0,144.7 72.0,156.2 Q62.0,167.7 52.0,156.2 Z" fill="#9a9a9a"/><circle cx="62.0" cy="156.2" r="3.7" fill="#efefef"/><circle cx="62.0" cy="156.2" r="1.9" fill="#9a9a9a"/>
<path d="M83.6,150.7 l4.2,-4 h14 v14.2 l-4.2,4.6 h-14z" fill="#fff" stroke="#444" stroke-width="1.4" stroke-linejoin="round"/><path d="M84.2,151.2 h14 v14.6 h-14z" fill="#dfe2e8"/><path d="M83.6,150.7 h14 l4.2,-4 M97.6,150.7 v14.4" fill="none" stroke="#444" stroke-width="1.2"/>
<circle cx="239.6" cy="156.4" r="7.3" fill="#fff" stroke="#333" stroke-width="1.3"/><circle cx="239.6" cy="156.4" r="3" fill="#222"/>
<path d="M48.5,178.5 v15.4 l10.8,-7.7z" fill="#ececec" stroke="#333" stroke-width="1.5" stroke-linejoin="round"/>
<path d="M48.5,208.5 v15.4 l10.8,-7.7z" fill="#ececec" stroke="#333" stroke-width="1.5" stroke-linejoin="round"/>
<path d="M48.5,238.5 v15.4 l10.8,-7.7z" fill="#ececec" stroke="#333" stroke-width="1.5" stroke-linejoin="round"/>
<path d="M48.5,268.5 v15.4 l10.8,-7.7z" fill="#ececec" stroke="#333" stroke-width="1.5" stroke-linejoin="round"/>
<path d="M48.5,448.5 v15.4 l10.8,-7.7z" fill="#ececec" stroke="#333" stroke-width="1.5" stroke-linejoin="round"/>
<path d="M91.1,183.8 L94.0,183.8 L94.0,187.8 L91.1,187.8 L90.5,189.4 L92.5,191.4 L89.6,194.3 L87.6,192.3 L86.0,192.9 L86.0,195.8 L82.0,195.8 L82.0,192.9 L80.4,192.3 L78.4,194.3 L75.5,191.4 L77.5,189.4 L76.9,187.8 L74.0,187.8 L74.0,183.8 L76.9,183.8 L77.5,182.2 L75.5,180.2 L78.4,177.3 L80.4,179.3 L82.0,178.7 L82.0,175.8 L86.0,175.8 L86.0,178.7 L87.6,179.3 L89.6,177.3 L92.5,180.2 L90.5,182.2Z M84.0,182.1 a3.7,3.7 0 1 0 0.01,0Z" fill="#9a9a9a" fill-rule="evenodd"/>
<path d="M74.2,208.0 h8.6 l-1.6,2.1 h-7z" fill="#9a9a9a"/><path d="M74.2,210.7 h7.8 l2,-2.4 h10.2 v15.6 h-20z" fill="#9a9a9a"/>
<path d="M74.2,238.0 h8.6 l-1.6,2.1 h-7z" fill="#9a9a9a"/><path d="M74.2,240.7 h7.8 l2,-2.4 h10.2 v15.6 h-20z" fill="#9a9a9a"/>
<path d="M74.7,276.0 Q84.2,265.0 93.7,276.0 Q84.2,287.0 74.7,276.0 Z" fill="none" stroke="#a2a2a2" stroke-width="1.1"/><circle cx="84.2" cy="276.0" r="3.6" fill="none" stroke="#a2a2a2" stroke-width="1"/><path d="M77.7,269.0 L91.2,283.0" stroke="#a2a2a2" stroke-width="1.1"/>
<path d="M105.4,268.0 h8.6 l-1.6,2.1 h-7z" fill="#9a9a9a"/><path d="M105.4,270.7 h7.8 l2,-2.4 h10.2 v15.6 h-20z" fill="#9a9a9a"/>
<defs><linearGradient id="gt298" x1="0" y1="0" x2="1" y2="1"><stop offset="0.3" stop-color="#e0e0e0"/><stop offset="1" stop-color="#555"/></linearGradient></defs><path d="M46.7,312.6 h13.6 v-13.8z" fill="url(#gt298)" stroke="#2e2e2e" stroke-width="1.3" stroke-linejoin="round"/>
<path d="M74.2,306.0 Q84.2,294.5 94.2,306.0 Q84.2,317.5 74.2,306.0 Z" fill="#9a9a9a"/><circle cx="84.2" cy="306.0" r="3.7" fill="#efefef"/><circle cx="84.2" cy="306.0" r="1.9" fill="#9a9a9a"/>
<path d="M105.4,298.0 h8.6 l-1.6,2.1 h-7z" fill="#9a9a9a"/><path d="M105.4,300.7 h7.8 l2,-2.4 h10.2 v15.6 h-20z" fill="#9a9a9a"/>
<path d="M96.8,336.0 Q106.8,324.5 116.8,336.0 Q106.8,347.5 96.8,336.0 Z" fill="#9a9a9a"/><circle cx="106.8" cy="336.0" r="3.7" fill="#efefef"/><circle cx="106.8" cy="336.0" r="1.9" fill="#9a9a9a"/>
<defs><linearGradient id="gc0" x1="0" y1="0" x2="1" y2="0"><stop offset="0" stop-color="#e8eaf0"/><stop offset="0.45" stop-color="#b9bdc9"/><stop offset="1" stop-color="#f4f5f8"/></linearGradient></defs><rect x="128.3" y="326.4" width="19.2" height="19" rx="5" ry="4.5" fill="#fff" stroke="#444" stroke-width="1.4"/><path d="M130.9,333.9 q8,-2 14,0 v9 q-7,3.2 -14,0z" fill="url(#gc0)"/>
<path d="M96.8,366.0 Q106.8,354.5 116.8,366.0 Q106.8,377.5 96.8,366.0 Z" fill="#9a9a9a"/><circle cx="106.8" cy="366.0" r="3.7" fill="#efefef"/><circle cx="106.8" cy="366.0" r="1.9" fill="#9a9a9a"/>
<defs><linearGradient id="gc1" x1="0" y1="0" x2="1" y2="0"><stop offset="0" stop-color="#e8eaf0"/><stop offset="0.45" stop-color="#b9bdc9"/><stop offset="1" stop-color="#f4f5f8"/></linearGradient></defs><rect x="128.3" y="356.4" width="19.2" height="19" rx="5" ry="4.5" fill="#fff" stroke="#444" stroke-width="1.4"/><path d="M130.9,363.9 q8,-2 14,0 v9 q-7,3.2 -14,0z" fill="url(#gc1)"/>
<path d="M96.8,396.0 Q106.8,384.5 116.8,396.0 Q106.8,407.5 96.8,396.0 Z" fill="#9a9a9a"/><circle cx="106.8" cy="396.0" r="3.7" fill="#efefef"/><circle cx="106.8" cy="396.0" r="1.9" fill="#9a9a9a"/>
<defs><linearGradient id="gc2" x1="0" y1="0" x2="1" y2="0"><stop offset="0" stop-color="#e8eaf0"/><stop offset="0.45" stop-color="#b9bdc9"/><stop offset="1" stop-color="#f4f5f8"/></linearGradient></defs><rect x="128.3" y="386.4" width="19.2" height="19" rx="5" ry="4.5" fill="#fff" stroke="#444" stroke-width="1.4"/><path d="M130.9,393.9 q8,-2 14,0 v9 q-7,3.2 -14,0z" fill="url(#gc2)"/>
<path d="M96.8,426.0 Q106.8,414.5 116.8,426.0 Q106.8,437.5 96.8,426.0 Z" fill="#9a9a9a"/><circle cx="106.8" cy="426.0" r="3.7" fill="#efefef"/><circle cx="106.8" cy="426.0" r="1.9" fill="#9a9a9a"/>
<defs><linearGradient id="gc3" x1="0" y1="0" x2="1" y2="0"><stop offset="0" stop-color="#e8eaf0"/><stop offset="0.45" stop-color="#b9bdc9"/><stop offset="1" stop-color="#f4f5f8"/></linearGradient></defs><rect x="128.3" y="416.4" width="19.2" height="19" rx="5" ry="4.5" fill="#fff" stroke="#444" stroke-width="1.4"/><path d="M130.9,423.9 q8,-2 14,0 v9 q-7,3.2 -14,0z" fill="url(#gc3)"/>
<path d="M74.7,456.0 Q84.2,445.0 93.7,456.0 Q84.2,467.0 74.7,456.0 Z" fill="none" stroke="#a2a2a2" stroke-width="1.1"/><circle cx="84.2" cy="456.0" r="3.6" fill="none" stroke="#a2a2a2" stroke-width="1"/><path d="M77.7,449.0 L91.2,463.0" stroke="#a2a2a2" stroke-width="1.1"/>
<path d="M105.4,448.0 h8.6 l-1.6,2.1 h-7z" fill="#9a9a9a"/><path d="M105.4,450.7 h7.8 l2,-2.4 h10.2 v15.6 h-20z" fill="#9a9a9a"/>
</svg>
</body></html>
